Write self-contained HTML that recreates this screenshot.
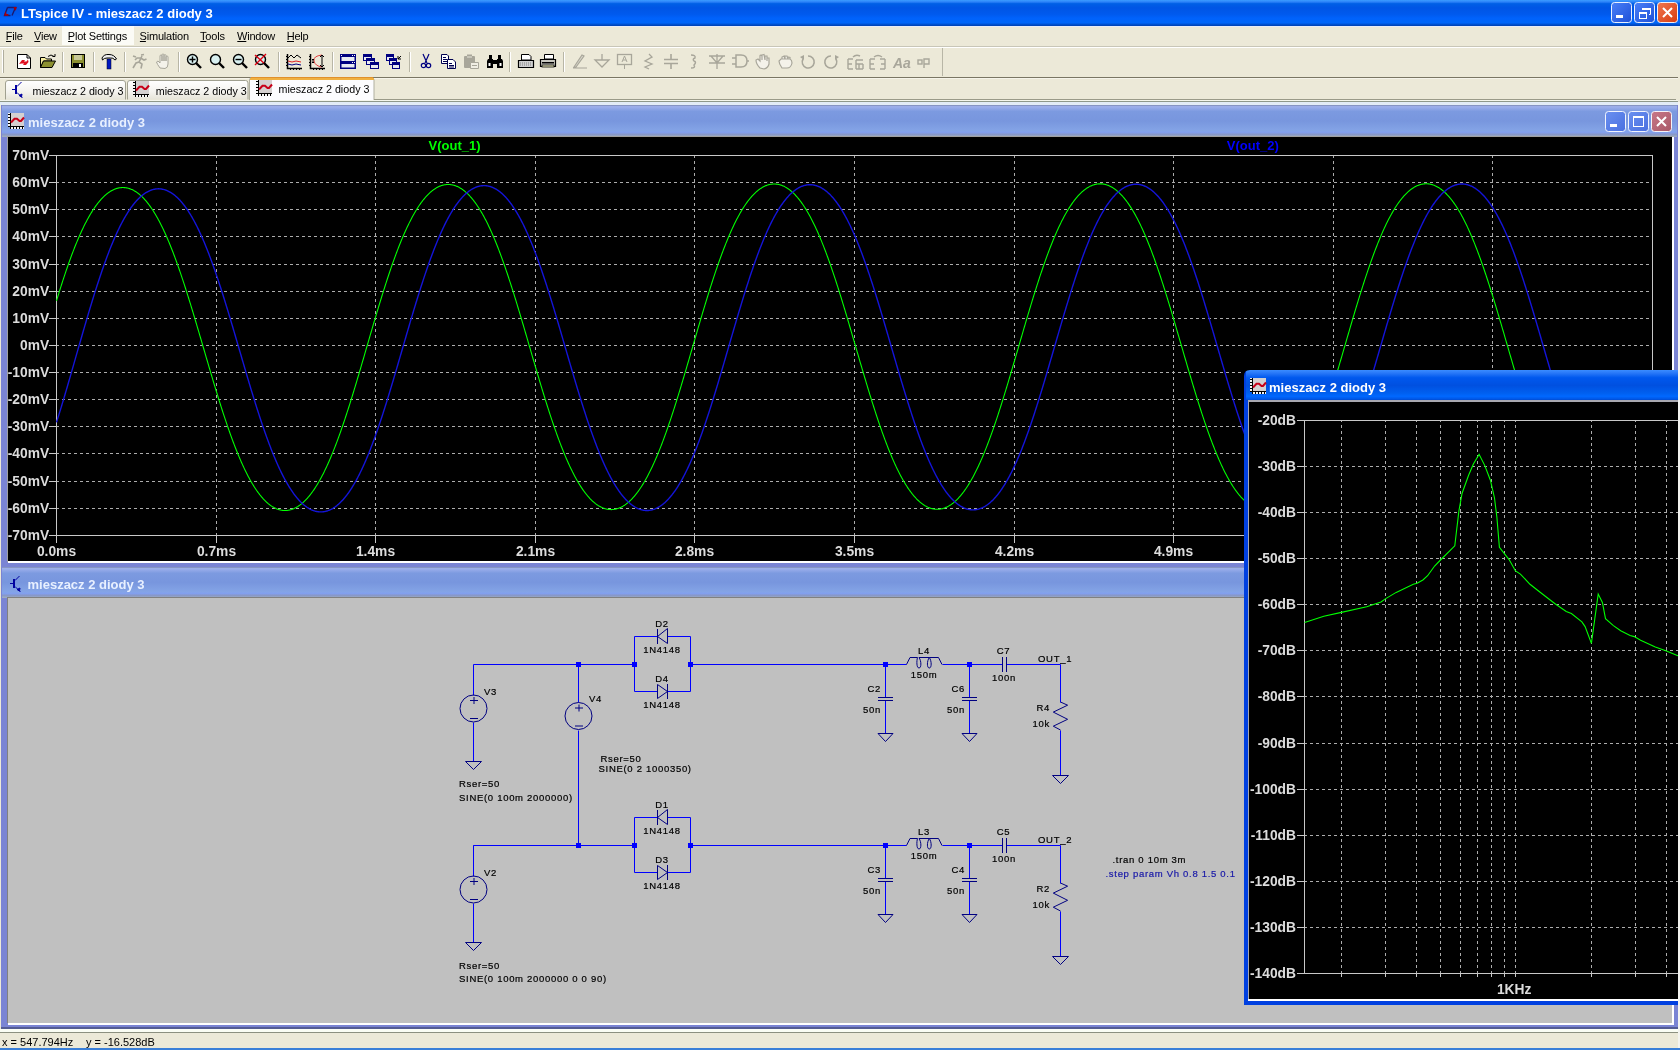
<!DOCTYPE html>
<html><head><meta charset="utf-8"><style>
html,body{margin:0;padding:0;overflow:hidden;background:#ECE9D8}
svg text{font-family:"Liberation Sans", sans-serif;white-space:pre}
</style></head><body>
<svg width="1680" height="1050" viewBox="0 0 1680 1050" style="display:block;will-change:transform" font-family="'Liberation Sans', sans-serif">
<defs>
<linearGradient id="gMain" x1="0" y1="0" x2="0" y2="1">
<stop offset="0" stop-color="#3C9CFF"/><stop offset="0.08" stop-color="#2A80F8"/><stop offset="0.14" stop-color="#0060E6"/>
<stop offset="0.3" stop-color="#0055E5"/><stop offset="0.55" stop-color="#005AEE"/><stop offset="0.7" stop-color="#0062FC"/>
<stop offset="0.88" stop-color="#0066F8"/><stop offset="0.94" stop-color="#0050D0"/><stop offset="1" stop-color="#0040B0"/>
</linearGradient>
<linearGradient id="gInact" x1="0" y1="0" x2="0" y2="1">
<stop offset="0" stop-color="#7A88B0"/><stop offset="0.05" stop-color="#9EB0EC"/><stop offset="0.2" stop-color="#7C9AE0"/>
<stop offset="0.5" stop-color="#7896DE"/><stop offset="0.8" stop-color="#84A4E6"/><stop offset="0.85" stop-color="#82A0F0"/>
<stop offset="0.92" stop-color="#8898C8"/><stop offset="1" stop-color="#A0B0C0"/>
</linearGradient>
<linearGradient id="gAct" x1="0" y1="0" x2="0" y2="1">
<stop offset="0" stop-color="#3A8CFF"/><stop offset="0.1" stop-color="#2878F8"/><stop offset="0.25" stop-color="#0058EE"/>
<stop offset="0.5" stop-color="#0050E0"/><stop offset="0.75" stop-color="#0060F0"/><stop offset="0.85" stop-color="#0068FF"/>
<stop offset="0.93" stop-color="#0058E8"/><stop offset="1" stop-color="#0040C0"/>
</linearGradient>
</defs>
<rect x="0" y="0" width="1680" height="1050" fill="#ECE9D8" />
<rect x="0" y="0" width="1680" height="26" fill="url(#gMain)" />
<rect x="0" y="26" width="1680" height="1" fill="#E8ECF8" />
<text x="21" y="18" font-size="13" font-weight="700" fill="#FFFFFF" text-anchor="start" >LTspice IV - mieszacz 2 diody 3</text>
<rect x="62" y="26" width="72" height="19" fill="#FBFBF6" />
<rect x="0" y="46" width="1680" height="1" fill="#C8C6B8" />
<rect x="0" y="47" width="1680" height="1" fill="#FFFFFF" />
<rect x="0" y="77" width="1678" height="1" fill="#7A7664" />
<rect x="0" y="78" width="1678" height="1" fill="#F6F4EA" />
<rect x="1" y="105" width="1677" height="462" fill="#7A84D4" />
<rect x="2" y="105" width="1675" height="32" fill="url(#gInact)" />
<rect x="7" y="136" width="1666" height="426" fill="#A0A0A0" />
<rect x="8" y="137" width="1664" height="424" fill="#000000" />
<rect x="8" y="561" width="1666" height="2" fill="#FFFFFF" />
<rect x="1672" y="137" width="2" height="426" fill="#FFFFFF" />
<path d="M216.5 155V535 M375.5 155V535 M535.5 155V535 M694.5 155V535 M854.5 155V535 M1014.5 155V535 M1173.5 155V535 M1333.5 155V535 M1492.5 155V535" stroke="#ACACAC" stroke-width="1" stroke-dasharray="3 3" fill="none"/>
<path d="M56 182.5H1652 M56 209.5H1652 M56 236.5H1652 M56 264.5H1652 M56 291.5H1652 M56 318.5H1652 M56 345.5H1652 M56 372.5H1652 M56 399.5H1652 M56 426.5H1652 M56 453.5H1652 M56 481.5H1652 M56 508.5H1652" stroke="#ACACAC" stroke-width="1" stroke-dasharray="3 3" fill="none"/>
<path d="M56.5 155V543 M56 535.5H1653 M56 155.5H1653 M1652.5 155V536" stroke="#C8C8C8" stroke-width="1" fill="none"/>
<path d="M49 155.5H56 M49 182.5H56 M49 209.5H56 M49 236.5H56 M49 264.5H56 M49 291.5H56 M49 318.5H56 M49 345.5H56 M49 372.5H56 M49 399.5H56 M49 426.5H56 M49 453.5H56 M49 481.5H56 M49 508.5H56 M49 535.5H56 M56.5 535V543 M216.5 535V543 M375.5 535V543 M535.5 535V543 M694.5 535V543 M854.5 535V543 M1014.5 535V543 M1173.5 535V543 M1333.5 535V543 M1492.5 535V543 M1652.5 535V543" stroke="#C8C8C8" stroke-width="1" fill="none"/>
<text x="49.2" y="160.3" font-size="13.8" font-weight="700" fill="#DCDCDC" text-anchor="end" >70mV</text>
<text x="49.2" y="187.3" font-size="13.8" font-weight="700" fill="#DCDCDC" text-anchor="end" >60mV</text>
<text x="49.2" y="214.3" font-size="13.8" font-weight="700" fill="#DCDCDC" text-anchor="end" >50mV</text>
<text x="49.2" y="241.3" font-size="13.8" font-weight="700" fill="#DCDCDC" text-anchor="end" >40mV</text>
<text x="49.2" y="269.3" font-size="13.8" font-weight="700" fill="#DCDCDC" text-anchor="end" >30mV</text>
<text x="49.2" y="296.3" font-size="13.8" font-weight="700" fill="#DCDCDC" text-anchor="end" >20mV</text>
<text x="49.2" y="323.3" font-size="13.8" font-weight="700" fill="#DCDCDC" text-anchor="end" >10mV</text>
<text x="49.2" y="350.3" font-size="13.8" font-weight="700" fill="#DCDCDC" text-anchor="end" >0mV</text>
<text x="49.2" y="377.3" font-size="13.8" font-weight="700" fill="#DCDCDC" text-anchor="end" >-10mV</text>
<text x="49.2" y="404.3" font-size="13.8" font-weight="700" fill="#DCDCDC" text-anchor="end" >-20mV</text>
<text x="49.2" y="431.3" font-size="13.8" font-weight="700" fill="#DCDCDC" text-anchor="end" >-30mV</text>
<text x="49.2" y="458.3" font-size="13.8" font-weight="700" fill="#DCDCDC" text-anchor="end" >-40mV</text>
<text x="49.2" y="486.3" font-size="13.8" font-weight="700" fill="#DCDCDC" text-anchor="end" >-50mV</text>
<text x="49.2" y="513.3" font-size="13.8" font-weight="700" fill="#DCDCDC" text-anchor="end" >-60mV</text>
<text x="49.2" y="540.3" font-size="13.8" font-weight="700" fill="#DCDCDC" text-anchor="end" >-70mV</text>
<text x="56.5" y="556" font-size="13.8" font-weight="700" fill="#DCDCDC" text-anchor="middle" >0.0ms</text>
<text x="216.5" y="556" font-size="13.8" font-weight="700" fill="#DCDCDC" text-anchor="middle" >0.7ms</text>
<text x="375.5" y="556" font-size="13.8" font-weight="700" fill="#DCDCDC" text-anchor="middle" >1.4ms</text>
<text x="535.5" y="556" font-size="13.8" font-weight="700" fill="#DCDCDC" text-anchor="middle" >2.1ms</text>
<text x="694.5" y="556" font-size="13.8" font-weight="700" fill="#DCDCDC" text-anchor="middle" >2.8ms</text>
<text x="854.5" y="556" font-size="13.8" font-weight="700" fill="#DCDCDC" text-anchor="middle" >3.5ms</text>
<text x="1014.5" y="556" font-size="13.8" font-weight="700" fill="#DCDCDC" text-anchor="middle" >4.2ms</text>
<text x="1173.5" y="556" font-size="13.8" font-weight="700" fill="#DCDCDC" text-anchor="middle" >4.9ms</text>
<text x="1333.5" y="556" font-size="13.8" font-weight="700" fill="#DCDCDC" text-anchor="middle" >5.6ms</text>
<text x="1492.5" y="556" font-size="13.8" font-weight="700" fill="#DCDCDC" text-anchor="middle" >6.3ms</text>
<text x="1652.5" y="556" font-size="13.8" font-weight="700" fill="#DCDCDC" text-anchor="middle" >7.0ms</text>
<text x="454.5" y="150" font-size="13" font-weight="700" fill="#00FF00" text-anchor="middle" >V(out_1)</text>
<text x="1252.8" y="150" font-size="13" font-weight="700" fill="#0000FF" text-anchor="middle" >V(out_2)</text>
<clipPath id="c1"><rect x="56" y="155" width="1597" height="381"/></clipPath>
<polyline points="56.5,300.81 57.0,299.17 57.5,297.53 58.0,295.91 58.5,294.29 59.0,292.68 59.5,291.08 60.0,289.48 60.5,287.90 61.0,286.33 61.5,284.76 62.0,283.21 62.5,281.66 63.0,280.12 63.5,278.60 64.0,277.08 64.5,275.57 65.0,274.08 65.5,272.59 66.0,271.12 66.5,269.66 67.0,268.20 67.5,266.76 68.0,265.33 68.5,263.91 69.0,262.50 69.5,261.11 70.0,259.72 70.5,258.35 71.0,256.99 71.5,255.64 72.0,254.31 72.5,252.98 73.0,251.67 73.5,250.37 74.0,249.09 74.5,247.81 75.0,246.55 75.5,245.30 76.0,244.07 76.5,242.84 77.0,241.63 77.5,240.44 78.0,239.25 78.5,238.08 79.0,236.93 79.5,235.78 80.0,234.65 80.5,233.54 81.0,232.43 81.5,231.34 82.0,230.27 82.5,229.20 83.0,228.15 83.5,227.12 84.0,226.09 84.5,225.09 85.0,224.09 85.5,223.11 86.0,222.14 86.5,221.19 87.0,220.25 87.5,219.32 88.0,218.41 88.5,217.51 89.0,216.62 89.5,215.75 90.0,214.90 90.5,214.05 91.0,213.22 91.5,212.40 92.0,211.60 92.5,210.81 93.0,210.04 93.5,209.28 94.0,208.53 94.5,207.79 95.0,207.07 95.5,206.36 96.0,205.67 96.5,204.99 97.0,204.32 97.5,203.67 98.0,203.03 98.5,202.40 99.0,201.79 99.5,201.19 100.0,200.61 100.5,200.03 101.0,199.47 101.5,198.93 102.0,198.39 102.5,197.87 103.0,197.37 103.5,196.87 104.0,196.39 104.5,195.93 105.0,195.47 105.5,195.03 106.0,194.60 106.5,194.19 107.0,193.78 107.5,193.39 108.0,193.02 108.5,192.65 109.0,192.30 109.5,191.96 110.0,191.64 110.5,191.32 111.0,191.02 111.5,190.73 112.0,190.46 112.5,190.20 113.0,189.95 113.5,189.71 114.0,189.48 114.5,189.27 115.0,189.07 115.5,188.88 116.0,188.71 116.5,188.54 117.0,188.39 117.5,188.26 118.0,188.13 118.5,188.02 119.0,187.91 119.5,187.83 120.0,187.75 120.5,187.69 121.0,187.63 121.5,187.59 122.0,187.57 122.5,187.55 123.0,187.55 123.5,187.56 124.0,187.58 124.5,187.62 125.0,187.66 125.5,187.72 126.0,187.79 126.5,187.88 127.0,187.97 127.5,188.08 128.0,188.20 128.5,188.34 129.0,188.48 129.5,188.64 130.0,188.81 130.5,188.99 131.0,189.19 131.5,189.40 132.0,189.62 132.5,189.85 133.0,190.09 133.5,190.35 134.0,190.62 134.5,190.91 135.0,191.20 135.5,191.51 136.0,191.83 136.5,192.17 137.0,192.51 137.5,192.87 138.0,193.25 138.5,193.63 139.0,194.03 139.5,194.44 140.0,194.86 140.5,195.30 141.0,195.75 141.5,196.21 142.0,196.69 142.5,197.18 143.0,197.68 143.5,198.20 144.0,198.72 144.5,199.27 145.0,199.82 145.5,200.39 146.0,200.97 146.5,201.57 147.0,202.17 147.5,202.80 148.0,203.43 148.5,204.08 149.0,204.74 149.5,205.42 150.0,206.11 150.5,206.81 151.0,207.52 151.5,208.25 152.0,209.00 152.5,209.75 153.0,210.52 153.5,211.31 154.0,212.10 154.5,212.92 155.0,213.74 155.5,214.58 156.0,215.43 156.5,216.29 157.0,217.17 157.5,218.07 158.0,218.97 158.5,219.89 159.0,220.83 159.5,221.77 160.0,222.73 160.5,223.71 161.0,224.69 161.5,225.69 162.0,226.71 162.5,227.74 163.0,228.78 163.5,229.83 164.0,230.90 164.5,231.98 165.0,233.07 165.5,234.18 166.0,235.30 166.5,236.43 167.0,237.58 167.5,238.74 168.0,239.91 168.5,241.10 169.0,242.29 169.5,243.50 170.0,244.73 170.5,245.96 171.0,247.21 171.5,248.47 172.0,249.74 172.5,251.03 173.0,252.32 173.5,253.63 174.0,254.95 174.5,256.28 175.0,257.62 175.5,258.98 176.0,260.34 176.5,261.72 177.0,263.11 177.5,264.51 178.0,265.92 178.5,267.34 179.0,268.77 179.5,270.21 180.0,271.66 180.5,273.12 181.0,274.60 181.5,276.08 182.0,277.57 182.5,279.07 183.0,280.58 183.5,282.10 184.0,283.63 184.5,285.16 185.0,286.71 185.5,288.26 186.0,289.82 186.5,291.39 187.0,292.97 187.5,294.55 188.0,296.15 188.5,297.75 189.0,299.35 189.5,300.97 190.0,302.59 190.5,304.21 191.0,305.85 191.5,307.49 192.0,309.13 192.5,310.78 193.0,312.44 193.5,314.10 194.0,315.76 194.5,317.43 195.0,319.11 195.5,320.78 196.0,322.47 196.5,324.15 197.0,325.84 197.5,327.54 198.0,329.23 198.5,330.93 199.0,332.63 199.5,334.34 200.0,336.04 200.5,337.75 201.0,339.46 201.5,341.17 202.0,342.88 202.5,344.59 203.0,346.30 203.5,348.02 204.0,349.73 204.5,351.44 205.0,353.16 205.5,354.87 206.0,356.58 206.5,358.29 207.0,360.00 207.5,361.71 208.0,363.41 208.5,365.12 209.0,366.82 209.5,368.52 210.0,370.21 210.5,371.90 211.0,373.59 211.5,375.28 212.0,376.96 212.5,378.64 213.0,380.31 213.5,381.98 214.0,383.65 214.5,385.31 215.0,386.96 215.5,388.61 216.0,390.26 216.5,391.89 217.0,393.53 217.5,395.15 218.0,396.77 218.5,398.38 219.0,399.99 219.5,401.59 220.0,403.18 220.5,404.77 221.0,406.34 221.5,407.91 222.0,409.47 222.5,411.02 223.0,412.57 223.5,414.10 224.0,415.63 224.5,417.15 225.0,418.66 225.5,420.16 226.0,421.65 226.5,423.13 227.0,424.60 227.5,426.06 228.0,427.51 228.5,428.95 229.0,430.38 229.5,431.80 230.0,433.21 230.5,434.61 231.0,436.00 231.5,437.37 232.0,438.74 232.5,440.09 233.0,441.44 233.5,442.77 234.0,444.09 234.5,445.39 235.0,446.69 235.5,447.97 236.0,449.24 236.5,450.50 237.0,451.75 237.5,452.99 238.0,454.21 238.5,455.42 239.0,456.62 239.5,457.80 240.0,458.97 240.5,460.13 241.0,461.28 241.5,462.41 242.0,463.53 242.5,464.64 243.0,465.73 243.5,466.82 244.0,467.88 244.5,468.94 245.0,469.98 245.5,471.01 246.0,472.02 246.5,473.02 247.0,474.01 247.5,474.99 248.0,475.95 248.5,476.90 249.0,477.83 249.5,478.75 250.0,479.66 250.5,480.55 251.0,481.43 251.5,482.30 252.0,483.16 252.5,484.00 253.0,484.82 253.5,485.63 254.0,486.43 254.5,487.22 255.0,487.99 255.5,488.75 256.0,489.50 256.5,490.23 257.0,490.95 257.5,491.65 258.0,492.34 258.5,493.02 259.0,493.69 259.5,494.34 260.0,494.98 260.5,495.60 261.0,496.21 261.5,496.81 262.0,497.40 262.5,497.97 263.0,498.53 263.5,499.07 264.0,499.61 264.5,500.13 265.0,500.63 265.5,501.13 266.0,501.61 266.5,502.07 267.0,502.53 267.5,502.97 268.0,503.40 268.5,503.82 269.0,504.22 269.5,504.61 270.0,504.99 270.5,505.35 271.0,505.71 271.5,506.05 272.0,506.37 272.5,506.69 273.0,506.99 273.5,507.28 274.0,507.56 274.5,507.82 275.0,508.07 275.5,508.31 276.0,508.54 276.5,508.75 277.0,508.96 277.5,509.15 278.0,509.32 278.5,509.49 279.0,509.64 279.5,509.78 280.0,509.91 280.5,510.03 281.0,510.13 281.5,510.23 282.0,510.31 282.5,510.37 283.0,510.43 283.5,510.47 284.0,510.50 284.5,510.52 285.0,510.53 285.5,510.52 286.0,510.51 286.5,510.48 287.0,510.43 287.5,510.38 288.0,510.31 288.5,510.24 289.0,510.14 289.5,510.04 290.0,509.93 290.5,509.80 291.0,509.66 291.5,509.51 292.0,509.34 292.5,509.17 293.0,508.98 293.5,508.78 294.0,508.56 294.5,508.34 295.0,508.10 295.5,507.85 296.0,507.58 296.5,507.31 297.0,507.02 297.5,506.72 298.0,506.41 298.5,506.08 299.0,505.74 299.5,505.39 300.0,505.03 300.5,504.65 301.0,504.26 301.5,503.86 302.0,503.45 302.5,503.02 303.0,502.58 303.5,502.13 304.0,501.66 304.5,501.18 305.0,500.69 305.5,500.18 306.0,499.67 306.5,499.14 307.0,498.59 307.5,498.03 308.0,497.46 308.5,496.88 309.0,496.28 309.5,495.67 310.0,495.05 310.5,494.41 311.0,493.76 311.5,493.10 312.0,492.42 312.5,491.74 313.0,491.03 313.5,490.32 314.0,489.58 314.5,488.84 315.0,488.08 315.5,487.31 316.0,486.53 316.5,485.73 317.0,484.92 317.5,484.10 318.0,483.26 318.5,482.41 319.0,481.54 319.5,480.66 320.0,479.77 320.5,478.86 321.0,477.95 321.5,477.01 322.0,476.07 322.5,475.11 323.0,474.13 323.5,473.15 324.0,472.15 324.5,471.13 325.0,470.11 325.5,469.07 326.0,468.01 326.5,466.95 327.0,465.87 327.5,464.77 328.0,463.67 328.5,462.55 329.0,461.42 329.5,460.27 330.0,459.11 330.5,457.94 331.0,456.76 331.5,455.56 332.0,454.35 332.5,453.13 333.0,451.90 333.5,450.65 334.0,449.39 334.5,448.12 335.0,446.84 335.5,445.54 336.0,444.23 336.5,442.92 337.0,441.58 337.5,440.24 338.0,438.89 338.5,437.52 339.0,436.15 339.5,434.76 340.0,433.36 340.5,431.95 341.0,430.53 341.5,429.10 342.0,427.66 342.5,426.21 343.0,424.74 343.5,423.27 344.0,421.79 344.5,420.30 345.0,418.80 345.5,417.29 346.0,415.77 346.5,414.24 347.0,412.70 347.5,411.15 348.0,409.60 348.5,408.04 349.0,406.47 349.5,404.89 350.0,403.30 350.5,401.70 351.0,400.10 351.5,398.49 352.0,396.88 352.5,395.25 353.0,393.62 353.5,391.99 354.0,390.35 354.5,388.70 355.0,387.05 355.5,385.39 356.0,383.72 356.5,382.05 357.0,380.38 357.5,378.70 358.0,377.02 358.5,375.33 359.0,373.64 359.5,371.94 360.0,370.24 360.5,368.54 361.0,366.84 361.5,365.13 362.0,363.42 362.5,361.71 363.0,359.99 363.5,358.28 364.0,356.56 364.5,354.84 365.0,353.12 365.5,351.40 366.0,349.68 366.5,347.96 367.0,346.24 367.5,344.52 368.0,342.80 368.5,341.08 369.0,339.36 369.5,337.64 370.0,335.92 370.5,334.21 371.0,332.49 371.5,330.78 372.0,329.07 372.5,327.37 373.0,325.66 373.5,323.96 374.0,322.27 374.5,320.57 375.0,318.88 375.5,317.20 376.0,315.52 376.5,313.84 377.0,312.17 377.5,310.50 378.0,308.84 378.5,307.18 379.0,305.53 379.5,303.88 380.0,302.25 380.5,300.61 381.0,298.99 381.5,297.37 382.0,295.75 382.5,294.15 383.0,292.55 383.5,290.96 384.0,289.37 384.5,287.80 385.0,286.23 385.5,284.67 386.0,283.12 386.5,281.58 387.0,280.04 387.5,278.52 388.0,277.00 388.5,275.50 389.0,274.00 389.5,272.51 390.0,271.03 390.5,269.57 391.0,268.11 391.5,266.66 392.0,265.22 392.5,263.80 393.0,262.38 393.5,260.98 394.0,259.58 394.5,258.20 395.0,256.83 395.5,255.47 396.0,254.12 396.5,252.78 397.0,251.46 397.5,250.14 398.0,248.84 398.5,247.55 399.0,246.28 399.5,245.01 400.0,243.76 400.5,242.52 401.0,241.29 401.5,240.07 402.0,238.87 402.5,237.68 403.0,236.50 403.5,235.33 404.0,234.18 404.5,233.04 405.0,231.92 405.5,230.80 406.0,229.70 406.5,228.62 407.0,227.54 407.5,226.48 408.0,225.43 408.5,224.40 409.0,223.38 409.5,222.37 410.0,221.38 410.5,220.40 411.0,219.43 411.5,218.48 412.0,217.54 412.5,216.61 413.0,215.70 413.5,214.80 414.0,213.91 414.5,213.04 415.0,212.18 415.5,211.34 416.0,210.50 416.5,209.69 417.0,208.88 417.5,208.09 418.0,207.31 418.5,206.55 419.0,205.80 419.5,205.06 420.0,204.34 420.5,203.63 421.0,202.93 421.5,202.25 422.0,201.58 422.5,200.92 423.0,200.28 423.5,199.65 424.0,199.03 424.5,198.43 425.0,197.84 425.5,197.26 426.0,196.69 426.5,196.14 427.0,195.61 427.5,195.08 428.0,194.57 428.5,194.07 429.0,193.59 429.5,193.11 430.0,192.65 430.5,192.21 431.0,191.77 431.5,191.35 432.0,190.94 432.5,190.55 433.0,190.17 433.5,189.80 434.0,189.44 434.5,189.09 435.0,188.76 435.5,188.44 436.0,188.14 436.5,187.84 437.0,187.56 437.5,187.29 438.0,187.03 438.5,186.79 439.0,186.56 439.5,186.34 440.0,186.13 440.5,185.94 441.0,185.76 441.5,185.59 442.0,185.43 442.5,185.28 443.0,185.15 443.5,185.03 444.0,184.92 444.5,184.82 445.0,184.74 445.5,184.67 446.0,184.61 446.5,184.56 447.0,184.52 447.5,184.50 448.0,184.49 448.5,184.49 449.0,184.50 449.5,184.53 450.0,184.57 450.5,184.62 451.0,184.68 451.5,184.75 452.0,184.84 452.5,184.94 453.0,185.05 453.5,185.17 454.0,185.31 454.5,185.46 455.0,185.62 455.5,185.79 456.0,185.97 456.5,186.17 457.0,186.38 457.5,186.60 458.0,186.84 458.5,187.08 459.0,187.34 459.5,187.61 460.0,187.90 460.5,188.19 461.0,188.50 461.5,188.83 462.0,189.16 462.5,189.51 463.0,189.87 463.5,190.24 464.0,190.62 464.5,191.02 465.0,191.43 465.5,191.86 466.0,192.29 466.5,192.74 467.0,193.20 467.5,193.68 468.0,194.17 468.5,194.67 469.0,195.18 469.5,195.71 470.0,196.25 470.5,196.80 471.0,197.37 471.5,197.95 472.0,198.54 472.5,199.15 473.0,199.77 473.5,200.40 474.0,201.05 474.5,201.71 475.0,202.38 475.5,203.07 476.0,203.77 476.5,204.48 477.0,205.20 477.5,205.94 478.0,206.70 478.5,207.46 479.0,208.25 479.5,209.04 480.0,209.85 480.5,210.67 481.0,211.50 481.5,212.35 482.0,213.21 482.5,214.09 483.0,214.98 483.5,215.88 484.0,216.79 484.5,217.72 485.0,218.67 485.5,219.62 486.0,220.59 486.5,221.58 487.0,222.57 487.5,223.58 488.0,224.61 488.5,225.64 489.0,226.69 489.5,227.76 490.0,228.83 490.5,229.92 491.0,231.02 491.5,232.14 492.0,233.27 492.5,234.41 493.0,235.57 493.5,236.73 494.0,237.91 494.5,239.11 495.0,240.31 495.5,241.53 496.0,242.76 496.5,244.01 497.0,245.26 497.5,246.53 498.0,247.81 498.5,249.10 499.0,250.40 499.5,251.72 500.0,253.05 500.5,254.39 501.0,255.74 501.5,257.10 502.0,258.47 502.5,259.86 503.0,261.25 503.5,262.66 504.0,264.08 504.5,265.50 505.0,266.94 505.5,268.39 506.0,269.85 506.5,271.32 507.0,272.80 507.5,274.29 508.0,275.78 508.5,277.29 509.0,278.81 509.5,280.33 510.0,281.87 510.5,283.41 511.0,284.96 511.5,286.52 512.0,288.09 512.5,289.67 513.0,291.25 513.5,292.84 514.0,294.44 514.5,296.05 515.0,297.66 515.5,299.28 516.0,300.91 516.5,302.54 517.0,304.18 517.5,305.83 518.0,307.48 518.5,309.13 519.0,310.79 519.5,312.46 520.0,314.13 520.5,315.81 521.0,317.49 521.5,319.17 522.0,320.86 522.5,322.55 523.0,324.25 523.5,325.95 524.0,327.65 524.5,329.35 525.0,331.06 525.5,332.77 526.0,334.48 526.5,336.19 527.0,337.91 527.5,339.63 528.0,341.34 528.5,343.06 529.0,344.78 529.5,346.50 530.0,348.22 530.5,349.93 531.0,351.65 531.5,353.37 532.0,355.09 532.5,356.80 533.0,358.52 533.5,360.23 534.0,361.94 534.5,363.65 535.0,365.35 535.5,367.06 536.0,368.76 536.5,370.45 537.0,372.15 537.5,373.84 538.0,375.53 538.5,377.21 539.0,378.89 539.5,380.56 540.0,382.23 540.5,383.90 541.0,385.56 541.5,387.21 542.0,388.86 542.5,390.50 543.0,392.14 543.5,393.77 544.0,395.39 544.5,397.01 545.0,398.62 545.5,400.22 546.0,401.82 546.5,403.41 547.0,404.99 547.5,406.56 548.0,408.13 548.5,409.68 549.0,411.23 549.5,412.77 550.0,414.30 550.5,415.83 551.0,417.34 551.5,418.84 552.0,420.34 552.5,421.82 553.0,423.30 553.5,424.76 554.0,426.22 554.5,427.66 555.0,429.10 555.5,430.52 556.0,431.93 556.5,433.34 557.0,434.73 557.5,436.11 558.0,437.48 558.5,438.83 559.0,440.18 559.5,441.52 560.0,442.84 560.5,444.15 561.0,445.45 561.5,446.74 562.0,448.01 562.5,449.27 563.0,450.53 563.5,451.76 564.0,452.99 564.5,454.20 565.0,455.41 565.5,456.59 566.0,457.77 566.5,458.93 567.0,460.08 567.5,461.22 568.0,462.34 568.5,463.45 569.0,464.55 569.5,465.64 570.0,466.71 570.5,467.77 571.0,468.81 571.5,469.84 572.0,470.86 572.5,471.87 573.0,472.86 573.5,473.83 574.0,474.80 574.5,475.75 575.0,476.69 575.5,477.61 576.0,478.52 576.5,479.42 577.0,480.30 577.5,481.17 578.0,482.03 578.5,482.87 579.0,483.70 579.5,484.52 580.0,485.32 580.5,486.11 581.0,486.89 581.5,487.65 582.0,488.40 582.5,489.13 583.0,489.85 583.5,490.56 584.0,491.26 584.5,491.94 585.0,492.60 585.5,493.26 586.0,493.90 586.5,494.53 587.0,495.14 587.5,495.74 588.0,496.33 588.5,496.91 589.0,497.47 589.5,498.02 590.0,498.55 590.5,499.08 591.0,499.58 591.5,500.08 592.0,500.56 592.5,501.03 593.0,501.49 593.5,501.94 594.0,502.37 594.5,502.79 595.0,503.19 595.5,503.59 596.0,503.97 596.5,504.33 597.0,504.69 597.5,505.03 598.0,505.36 598.5,505.68 599.0,505.98 599.5,506.28 600.0,506.55 600.5,506.82 601.0,507.08 601.5,507.32 602.0,507.55 602.5,507.77 603.0,507.97 603.5,508.16 604.0,508.34 604.5,508.51 605.0,508.67 605.5,508.81 606.0,508.94 606.5,509.06 607.0,509.17 607.5,509.26 608.0,509.34 608.5,509.41 609.0,509.47 609.5,509.52 610.0,509.55 610.5,509.57 611.0,509.58 611.5,509.58 612.0,509.56 612.5,509.54 613.0,509.50 613.5,509.44 614.0,509.38 614.5,509.30 615.0,509.21 615.5,509.11 616.0,509.00 616.5,508.88 617.0,508.74 617.5,508.59 618.0,508.43 618.5,508.25 619.0,508.07 619.5,507.87 620.0,507.66 620.5,507.43 621.0,507.20 621.5,506.95 622.0,506.69 622.5,506.41 623.0,506.13 623.5,505.83 624.0,505.52 624.5,505.19 625.0,504.86 625.5,504.51 626.0,504.15 626.5,503.77 627.0,503.38 627.5,502.98 628.0,502.57 628.5,502.15 629.0,501.71 629.5,501.26 630.0,500.79 630.5,500.32 631.0,499.83 631.5,499.32 632.0,498.81 632.5,498.28 633.0,497.74 633.5,497.18 634.0,496.61 634.5,496.03 635.0,495.44 635.5,494.83 636.0,494.21 636.5,493.57 637.0,492.92 637.5,492.26 638.0,491.59 638.5,490.90 639.0,490.20 639.5,489.48 640.0,488.76 640.5,488.01 641.0,487.26 641.5,486.49 642.0,485.71 642.5,484.91 643.0,484.10 643.5,483.28 644.0,482.44 644.5,481.59 645.0,480.73 645.5,479.85 646.0,478.96 646.5,478.06 647.0,477.14 647.5,476.21 648.0,475.27 648.5,474.31 649.0,473.34 649.5,472.35 650.0,471.35 650.5,470.34 651.0,469.32 651.5,468.28 652.0,467.23 652.5,466.16 653.0,465.08 653.5,463.99 654.0,462.89 654.5,461.77 655.0,460.64 655.5,459.50 656.0,458.34 656.5,457.17 657.0,455.99 657.5,454.79 658.0,453.59 658.5,452.37 659.0,451.13 659.5,449.89 660.0,448.63 660.5,447.36 661.0,446.08 661.5,444.79 662.0,443.48 662.5,442.16 663.0,440.83 663.5,439.49 664.0,438.14 664.5,436.78 665.0,435.40 665.5,434.02 666.0,432.62 666.5,431.21 667.0,429.79 667.5,428.36 668.0,426.92 668.5,425.47 669.0,424.01 669.5,422.54 670.0,421.06 670.5,419.57 671.0,418.07 671.5,416.56 672.0,415.04 672.5,413.52 673.0,411.98 673.5,410.44 674.0,408.88 674.5,407.32 675.0,405.75 675.5,404.17 676.0,402.59 676.5,400.99 677.0,399.39 677.5,397.78 678.0,396.17 678.5,394.55 679.0,392.92 679.5,391.29 680.0,389.65 680.5,388.00 681.0,386.35 681.5,384.69 682.0,383.03 682.5,381.36 683.0,379.68 683.5,378.01 684.0,376.33 684.5,374.64 685.0,372.95 685.5,371.26 686.0,369.56 686.5,367.86 687.0,366.16 687.5,364.45 688.0,362.74 688.5,361.03 689.0,359.32 689.5,357.60 690.0,355.89 690.5,354.17 691.0,352.45 691.5,350.73 692.0,349.01 692.5,347.29 693.0,345.57 693.5,343.85 694.0,342.13 694.5,340.41 695.0,338.69 695.5,336.98 696.0,335.26 696.5,333.55 697.0,331.84 697.5,330.13 698.0,328.42 698.5,326.71 699.0,325.01 699.5,323.31 700.0,321.62 700.5,319.93 701.0,318.24 701.5,316.55 702.0,314.87 702.5,313.20 703.0,311.53 703.5,309.86 704.0,308.20 704.5,306.54 705.0,304.89 705.5,303.25 706.0,301.61 706.5,299.98 707.0,298.35 707.5,296.74 708.0,295.12 708.5,293.52 709.0,291.92 709.5,290.33 710.0,288.75 710.5,287.17 711.0,285.61 711.5,284.05 712.0,282.50 712.5,280.96 713.0,279.42 713.5,277.90 714.0,276.39 714.5,274.88 715.0,273.39 715.5,271.90 716.0,270.42 716.5,268.96 717.0,267.50 717.5,266.05 718.0,264.62 718.5,263.19 719.0,261.78 719.5,260.38 720.0,258.98 720.5,257.60 721.0,256.23 721.5,254.87 722.0,253.52 722.5,252.19 723.0,250.86 723.5,249.55 724.0,248.25 724.5,246.96 725.0,245.68 725.5,244.42 726.0,243.17 726.5,241.93 727.0,240.70 727.5,239.49 728.0,238.28 728.5,237.09 729.0,235.92 729.5,234.75 730.0,233.60 730.5,232.46 731.0,231.34 731.5,230.23 732.0,229.13 732.5,228.04 733.0,226.97 733.5,225.91 734.0,224.86 734.5,223.83 735.0,222.81 735.5,221.80 736.0,220.81 736.5,219.83 737.0,218.87 737.5,217.91 738.0,216.97 738.5,216.05 739.0,215.14 739.5,214.24 740.0,213.35 740.5,212.48 741.0,211.62 741.5,210.78 742.0,209.95 742.5,209.13 743.0,208.33 743.5,207.54 744.0,206.76 744.5,206.00 745.0,205.25 745.5,204.51 746.0,203.79 746.5,203.08 747.0,202.38 747.5,201.70 748.0,201.03 748.5,200.38 749.0,199.73 749.5,199.11 750.0,198.49 750.5,197.89 751.0,197.30 751.5,196.72 752.0,196.16 752.5,195.61 753.0,195.07 753.5,194.55 754.0,194.04 754.5,193.54 755.0,193.06 755.5,192.58 756.0,192.13 756.5,191.68 757.0,191.25 757.5,190.83 758.0,190.42 758.5,190.03 759.0,189.64 759.5,189.28 760.0,188.92 760.5,188.58 761.0,188.24 761.5,187.93 762.0,187.62 762.5,187.33 763.0,187.05 763.5,186.78 764.0,186.52 764.5,186.28 765.0,186.05 765.5,185.83 766.0,185.62 766.5,185.43 767.0,185.25 767.5,185.08 768.0,184.92 768.5,184.78 769.0,184.65 769.5,184.53 770.0,184.42 770.5,184.32 771.0,184.24 771.5,184.17 772.0,184.11 772.5,184.06 773.0,184.03 773.5,184.00 774.0,183.99 774.5,184.00 775.0,184.01 775.5,184.04 776.0,184.08 776.5,184.13 777.0,184.19 777.5,184.26 778.0,184.35 778.5,184.45 779.0,184.56 779.5,184.69 780.0,184.82 780.5,184.97 781.0,185.13 781.5,185.31 782.0,185.49 782.5,185.69 783.0,185.90 783.5,186.12 784.0,186.36 784.5,186.61 785.0,186.87 785.5,187.14 786.0,187.42 786.5,187.72 787.0,188.03 787.5,188.35 788.0,188.69 788.5,189.04 789.0,189.40 789.5,189.77 790.0,190.16 790.5,190.55 791.0,190.97 791.5,191.39 792.0,191.83 792.5,192.28 793.0,192.74 793.5,193.22 794.0,193.71 794.5,194.21 795.0,194.72 795.5,195.25 796.0,195.79 796.5,196.35 797.0,196.91 797.5,197.49 798.0,198.09 798.5,198.69 799.0,199.31 799.5,199.95 800.0,200.60 800.5,201.26 801.0,201.93 801.5,202.62 802.0,203.32 802.5,204.03 803.0,204.76 803.5,205.50 804.0,206.25 804.5,207.02 805.0,207.80 805.5,208.60 806.0,209.40 806.5,210.23 807.0,211.06 807.5,211.91 808.0,212.77 808.5,213.65 809.0,214.54 809.5,215.44 810.0,216.36 810.5,217.29 811.0,218.23 811.5,219.19 812.0,220.16 812.5,221.14 813.0,222.14 813.5,223.15 814.0,224.17 814.5,225.21 815.0,226.26 815.5,227.33 816.0,228.40 816.5,229.49 817.0,230.60 817.5,231.71 818.0,232.84 818.5,233.99 819.0,235.14 819.5,236.31 820.0,237.49 820.5,238.69 821.0,239.89 821.5,241.11 822.0,242.34 822.5,243.59 823.0,244.84 823.5,246.11 824.0,247.39 824.5,248.69 825.0,249.99 825.5,251.31 826.0,252.63 826.5,253.97 827.0,255.33 827.5,256.69 828.0,258.06 828.5,259.45 829.0,260.84 829.5,262.25 830.0,263.67 830.5,265.10 831.0,266.54 831.5,267.99 832.0,269.45 832.5,270.92 833.0,272.39 833.5,273.88 834.0,275.38 834.5,276.89 835.0,278.41 835.5,279.93 836.0,281.47 836.5,283.01 837.0,284.57 837.5,286.13 838.0,287.70 838.5,289.27 839.0,290.86 839.5,292.45 840.0,294.05 840.5,295.66 841.0,297.27 841.5,298.89 842.0,300.52 842.5,302.15 843.0,303.79 843.5,305.44 844.0,307.09 844.5,308.75 845.0,310.41 845.5,312.07 846.0,313.75 846.5,315.42 847.0,317.10 847.5,318.79 848.0,320.48 848.5,322.17 849.0,323.87 849.5,325.57 850.0,327.27 850.5,328.97 851.0,330.68 851.5,332.39 852.0,334.10 852.5,335.82 853.0,337.53 853.5,339.25 854.0,340.97 854.5,342.69 855.0,344.40 855.5,346.12 856.0,347.84 856.5,349.56 857.0,351.28 857.5,353.00 858.0,354.72 858.5,356.43 859.0,358.15 859.5,359.86 860.0,361.57 860.5,363.28 861.0,364.99 861.5,366.69 862.0,368.39 862.5,370.09 863.0,371.78 863.5,373.48 864.0,375.16 864.5,376.85 865.0,378.53 865.5,380.20 866.0,381.87 866.5,383.54 867.0,385.20 867.5,386.85 868.0,388.50 868.5,390.14 869.0,391.78 869.5,393.41 870.0,395.04 870.5,396.65 871.0,398.27 871.5,399.87 872.0,401.47 872.5,403.06 873.0,404.64 873.5,406.21 874.0,407.78 874.5,409.33 875.0,410.88 875.5,412.42 876.0,413.96 876.5,415.48 877.0,416.99 877.5,418.50 878.0,419.99 878.5,421.48 879.0,422.95 879.5,424.42 880.0,425.87 880.5,427.32 881.0,428.75 881.5,430.18 882.0,431.59 882.5,432.99 883.0,434.39 883.5,435.77 884.0,437.14 884.5,438.50 885.0,439.84 885.5,441.18 886.0,442.50 886.5,443.81 887.0,445.11 887.5,446.40 888.0,447.68 888.5,448.94 889.0,450.19 889.5,451.43 890.0,452.66 890.5,453.87 891.0,455.07 891.5,456.26 892.0,457.44 892.5,458.60 893.0,459.75 893.5,460.89 894.0,462.01 894.5,463.13 895.0,464.22 895.5,465.31 896.0,466.38 896.5,467.44 897.0,468.49 897.5,469.52 898.0,470.54 898.5,471.54 899.0,472.53 899.5,473.51 900.0,474.48 900.5,475.43 901.0,476.37 901.5,477.29 902.0,478.20 902.5,479.10 903.0,479.99 903.5,480.86 904.0,481.71 904.5,482.56 905.0,483.39 905.5,484.20 906.0,485.01 906.5,485.80 907.0,486.57 907.5,487.33 908.0,488.08 908.5,488.82 909.0,489.54 909.5,490.25 910.0,490.94 910.5,491.63 911.0,492.29 911.5,492.95 912.0,493.59 912.5,494.22 913.0,494.84 913.5,495.44 914.0,496.03 914.5,496.60 915.0,497.16 915.5,497.71 916.0,498.25 916.5,498.77 917.0,499.28 917.5,499.78 918.0,500.26 918.5,500.73 919.0,501.19 919.5,501.64 920.0,502.07 920.5,502.49 921.0,502.89 921.5,503.29 922.0,503.67 922.5,504.04 923.0,504.39 923.5,504.73 924.0,505.07 924.5,505.38 925.0,505.69 925.5,505.98 926.0,506.26 926.5,506.53 927.0,506.78 927.5,507.03 928.0,507.26 928.5,507.47 929.0,507.68 929.5,507.87 930.0,508.05 930.5,508.22 931.0,508.38 931.5,508.52 932.0,508.65 932.5,508.77 933.0,508.88 933.5,508.98 934.0,509.06 934.5,509.13 935.0,509.19 935.5,509.23 936.0,509.27 936.5,509.29 937.0,509.30 937.5,509.30 938.0,509.28 938.5,509.25 939.0,509.21 939.5,509.16 940.0,509.10 940.5,509.02 941.0,508.94 941.5,508.83 942.0,508.72 942.5,508.60 943.0,508.46 943.5,508.31 944.0,508.15 944.5,507.98 945.0,507.79 945.5,507.59 946.0,507.38 946.5,507.16 947.0,506.92 947.5,506.67 948.0,506.41 948.5,506.14 949.0,505.85 949.5,505.56 950.0,505.24 950.5,504.92 951.0,504.59 951.5,504.24 952.0,503.88 952.5,503.50 953.0,503.12 953.5,502.72 954.0,502.30 954.5,501.88 955.0,501.44 955.5,500.99 956.0,500.53 956.5,500.05 957.0,499.56 957.5,499.06 958.0,498.54 958.5,498.01 959.0,497.47 959.5,496.92 960.0,496.35 960.5,495.77 961.0,495.17 961.5,494.57 962.0,493.95 962.5,493.31 963.0,492.66 963.5,492.00 964.0,491.33 964.5,490.64 965.0,489.94 965.5,489.23 966.0,488.50 966.5,487.76 967.0,487.00 967.5,486.23 968.0,485.45 968.5,484.66 969.0,483.85 969.5,483.03 970.0,482.19 970.5,481.34 971.0,480.48 971.5,479.60 972.0,478.71 972.5,477.81 973.0,476.89 973.5,475.96 974.0,475.02 974.5,474.06 975.0,473.09 975.5,472.10 976.0,471.10 976.5,470.09 977.0,469.07 977.5,468.03 978.0,466.98 978.5,465.91 979.0,464.84 979.5,463.75 980.0,462.64 980.5,461.52 981.0,460.39 981.5,459.25 982.0,458.10 982.5,456.93 983.0,455.74 983.5,454.55 984.0,453.34 984.5,452.12 985.0,450.89 985.5,449.65 986.0,448.39 986.5,447.12 987.0,445.84 987.5,444.55 988.0,443.24 988.5,441.92 989.0,440.59 989.5,439.25 990.0,437.90 990.5,436.54 991.0,435.16 991.5,433.78 992.0,432.38 992.5,430.97 993.0,429.56 993.5,428.13 994.0,426.69 994.5,425.24 995.0,423.78 995.5,422.31 996.0,420.83 996.5,419.34 997.0,417.84 997.5,416.33 998.0,414.81 998.5,413.29 999.0,411.75 999.5,410.20 1000.0,408.65 1000.5,407.09 1001.0,405.52 1001.5,403.94 1002.0,402.36 1002.5,400.77 1003.0,399.17 1003.5,397.56 1004.0,395.94 1004.5,394.32 1005.0,392.69 1005.5,391.06 1006.0,389.42 1006.5,387.77 1007.0,386.12 1007.5,384.46 1008.0,382.80 1008.5,381.13 1009.0,379.46 1009.5,377.78 1010.0,376.10 1010.5,374.42 1011.0,372.73 1011.5,371.03 1012.0,369.34 1012.5,367.64 1013.0,365.94 1013.5,364.23 1014.0,362.52 1014.5,360.81 1015.0,359.10 1015.5,357.38 1016.0,355.67 1016.5,353.95 1017.0,352.23 1017.5,350.51 1018.0,348.80 1018.5,347.08 1019.0,345.36 1019.5,343.64 1020.0,341.92 1020.5,340.20 1021.0,338.48 1021.5,336.76 1022.0,335.05 1022.5,333.34 1023.0,331.62 1023.5,329.91 1024.0,328.21 1024.5,326.50 1025.0,324.80 1025.5,323.10 1026.0,321.41 1026.5,319.72 1027.0,318.03 1027.5,316.34 1028.0,314.66 1028.5,312.99 1029.0,311.32 1029.5,309.65 1030.0,307.99 1030.5,306.34 1031.0,304.69 1031.5,303.04 1032.0,301.40 1032.5,299.77 1033.0,298.15 1033.5,296.53 1034.0,294.92 1034.5,293.31 1035.0,291.72 1035.5,290.13 1036.0,288.54 1036.5,286.97 1037.0,285.40 1037.5,283.85 1038.0,282.30 1038.5,280.76 1039.0,279.22 1039.5,277.70 1040.0,276.19 1040.5,274.68 1041.0,273.19 1041.5,271.70 1042.0,270.22 1042.5,268.76 1043.0,267.30 1043.5,265.86 1044.0,264.42 1044.5,263.00 1045.0,261.58 1045.5,260.18 1046.0,258.79 1046.5,257.40 1047.0,256.03 1047.5,254.68 1048.0,253.33 1048.5,251.99 1049.0,250.67 1049.5,249.36 1050.0,248.06 1050.5,246.77 1051.0,245.49 1051.5,244.23 1052.0,242.97 1052.5,241.74 1053.0,240.51 1053.5,239.29 1054.0,238.09 1054.5,236.90 1055.0,235.73 1055.5,234.56 1056.0,233.41 1056.5,232.27 1057.0,231.15 1057.5,230.04 1058.0,228.94 1058.5,227.85 1059.0,226.78 1059.5,225.72 1060.0,224.67 1060.5,223.64 1061.0,222.62 1061.5,221.62 1062.0,220.62 1062.5,219.65 1063.0,218.68 1063.5,217.73 1064.0,216.79 1064.5,215.86 1065.0,214.95 1065.5,214.05 1066.0,213.17 1066.5,212.30 1067.0,211.44 1067.5,210.60 1068.0,209.77 1068.5,208.95 1069.0,208.15 1069.5,207.36 1070.0,206.58 1070.5,205.82 1071.0,205.07 1071.5,204.33 1072.0,203.61 1072.5,202.90 1073.0,202.20 1073.5,201.52 1074.0,200.85 1074.5,200.20 1075.0,199.56 1075.5,198.93 1076.0,198.31 1076.5,197.71 1077.0,197.12 1077.5,196.54 1078.0,195.98 1078.5,195.43 1079.0,194.90 1079.5,194.37 1080.0,193.86 1080.5,193.37 1081.0,192.88 1081.5,192.41 1082.0,191.95 1082.5,191.51 1083.0,191.07 1083.5,190.65 1084.0,190.25 1084.5,189.85 1085.0,189.47 1085.5,189.10 1086.0,188.75 1086.5,188.40 1087.0,188.07 1087.5,187.75 1088.0,187.45 1088.5,187.16 1089.0,186.88 1089.5,186.61 1090.0,186.35 1090.5,186.11 1091.0,185.88 1091.5,185.66 1092.0,185.45 1092.5,185.26 1093.0,185.08 1093.5,184.91 1094.0,184.75 1094.5,184.61 1095.0,184.48 1095.5,184.36 1096.0,184.25 1096.5,184.16 1097.0,184.07 1097.5,184.00 1098.0,183.94 1098.5,183.90 1099.0,183.86 1099.5,183.84 1100.0,183.83 1100.5,183.83 1101.0,183.85 1101.5,183.87 1102.0,183.91 1102.5,183.96 1103.0,184.03 1103.5,184.10 1104.0,184.19 1104.5,184.29 1105.0,184.40 1105.5,184.53 1106.0,184.66 1106.5,184.81 1107.0,184.97 1107.5,185.15 1108.0,185.33 1108.5,185.53 1109.0,185.74 1109.5,185.96 1110.0,186.20 1110.5,186.45 1111.0,186.71 1111.5,186.98 1112.0,187.27 1112.5,187.56 1113.0,187.87 1113.5,188.20 1114.0,188.53 1114.5,188.88 1115.0,189.24 1115.5,189.61 1116.0,190.00 1116.5,190.40 1117.0,190.81 1117.5,191.24 1118.0,191.67 1118.5,192.12 1119.0,192.59 1119.5,193.06 1120.0,193.55 1120.5,194.05 1121.0,194.57 1121.5,195.10 1122.0,195.64 1122.5,196.19 1123.0,196.76 1123.5,197.34 1124.0,197.94 1124.5,198.54 1125.0,199.16 1125.5,199.80 1126.0,200.44 1126.5,201.10 1127.0,201.78 1127.5,202.47 1128.0,203.17 1128.5,203.88 1129.0,204.61 1129.5,205.35 1130.0,206.10 1130.5,206.87 1131.0,207.65 1131.5,208.45 1132.0,209.26 1132.5,210.08 1133.0,210.91 1133.5,211.76 1134.0,212.63 1134.5,213.50 1135.0,214.39 1135.5,215.30 1136.0,216.21 1136.5,217.14 1137.0,218.09 1137.5,219.04 1138.0,220.01 1138.5,221.00 1139.0,222.00 1139.5,223.01 1140.0,224.03 1140.5,225.07 1141.0,226.12 1141.5,227.18 1142.0,228.26 1142.5,229.35 1143.0,230.46 1143.5,231.57 1144.0,232.70 1144.5,233.85 1145.0,235.00 1145.5,236.17 1146.0,237.35 1146.5,238.55 1147.0,239.75 1147.5,240.97 1148.0,242.20 1148.5,243.45 1149.0,244.70 1149.5,245.97 1150.0,247.25 1150.5,248.55 1151.0,249.85 1151.5,251.17 1152.0,252.50 1152.5,253.84 1153.0,255.19 1153.5,256.55 1154.0,257.93 1154.5,259.31 1155.0,260.71 1155.5,262.11 1156.0,263.53 1156.5,264.96 1157.0,266.40 1157.5,267.85 1158.0,269.31 1158.5,270.78 1159.0,272.26 1159.5,273.75 1160.0,275.25 1160.5,276.76 1161.0,278.27 1161.5,279.80 1162.0,281.34 1162.5,282.88 1163.0,284.43 1163.5,285.99 1164.0,287.56 1164.5,289.14 1165.0,290.73 1165.5,292.32 1166.0,293.92 1166.5,295.52 1167.0,297.14 1167.5,298.76 1168.0,300.39 1168.5,302.02 1169.0,303.66 1169.5,305.31 1170.0,306.96 1170.5,308.62 1171.0,310.28 1171.5,311.95 1172.0,313.62 1172.5,315.29 1173.0,316.98 1173.5,318.66 1174.0,320.35 1174.5,322.04 1175.0,323.74 1175.5,325.44 1176.0,327.14 1176.5,328.85 1177.0,330.55 1177.5,332.26 1178.0,333.98 1178.5,335.69 1179.0,337.41 1179.5,339.12 1180.0,340.84 1180.5,342.56 1181.0,344.28 1181.5,346.00 1182.0,347.72 1182.5,349.44 1183.0,351.16 1183.5,352.87 1184.0,354.59 1184.5,356.31 1185.0,358.02 1185.5,359.74 1186.0,361.45 1186.5,363.16 1187.0,364.86 1187.5,366.57 1188.0,368.27 1188.5,369.97 1189.0,371.66 1189.5,373.35 1190.0,375.04 1190.5,376.73 1191.0,378.40 1191.5,380.08 1192.0,381.75 1192.5,383.42 1193.0,385.08 1193.5,386.73 1194.0,388.38 1194.5,390.02 1195.0,391.66 1195.5,393.29 1196.0,394.92 1196.5,396.54 1197.0,398.15 1197.5,399.75 1198.0,401.35 1198.5,402.94 1199.0,404.52 1199.5,406.09 1200.0,407.66 1200.5,409.22 1201.0,410.77 1201.5,412.31 1202.0,413.84 1202.5,415.36 1203.0,416.88 1203.5,418.38 1204.0,419.88 1204.5,421.36 1205.0,422.84 1205.5,424.30 1206.0,425.76 1206.5,427.20 1207.0,428.64 1207.5,430.06 1208.0,431.48 1208.5,432.88 1209.0,434.27 1209.5,435.65 1210.0,437.02 1210.5,438.38 1211.0,439.73 1211.5,441.06 1212.0,442.39 1212.5,443.70 1213.0,445.00 1213.5,446.29 1214.0,447.56 1214.5,448.83 1215.0,450.08 1215.5,451.32 1216.0,452.55 1216.5,453.76 1217.0,454.96 1217.5,456.15 1218.0,457.33 1218.5,458.49 1219.0,459.64 1219.5,460.78 1220.0,461.90 1220.5,463.02 1221.0,464.11 1221.5,465.20 1222.0,466.27 1222.5,467.33 1223.0,468.38 1223.5,469.41 1224.0,470.43 1224.5,471.43 1225.0,472.43 1225.5,473.40 1226.0,474.37 1226.5,475.32 1227.0,476.26 1227.5,477.19 1228.0,478.10 1228.5,478.99 1229.0,479.88 1229.5,480.75 1230.0,481.61 1230.5,482.45 1231.0,483.28 1231.5,484.10 1232.0,484.90 1232.5,485.69 1233.0,486.47 1233.5,487.23 1234.0,487.98 1234.5,488.71 1235.0,489.44 1235.5,490.14 1236.0,490.84 1236.5,491.52 1237.0,492.19 1237.5,492.85 1238.0,493.49 1238.5,494.12 1239.0,494.73 1239.5,495.33 1240.0,495.92 1240.5,496.50 1241.0,497.06 1241.5,497.61 1242.0,498.15 1242.5,498.67 1243.0,499.18 1243.5,499.68 1244.0,500.16 1244.5,500.63 1245.0,501.09 1245.5,501.53 1246.0,501.97 1246.5,502.39 1247.0,502.79 1247.5,503.19 1248.0,503.57 1248.5,503.94 1249.0,504.29 1249.5,504.63 1250.0,504.97 1250.5,505.28 1251.0,505.59 1251.5,505.88 1252.0,506.16 1252.5,506.43 1253.0,506.68 1253.5,506.93 1254.0,507.16 1254.5,507.38 1255.0,507.58 1255.5,507.77 1256.0,507.96 1256.5,508.12 1257.0,508.28 1257.5,508.42 1258.0,508.56 1258.5,508.68 1259.0,508.78 1259.5,508.88 1260.0,508.96 1260.5,509.03 1261.0,509.09 1261.5,509.14 1262.0,509.17 1262.5,509.19 1263.0,509.20 1263.5,509.20 1264.0,509.19 1264.5,509.16 1265.0,509.12 1265.5,509.07 1266.0,509.00 1266.5,508.93 1267.0,508.84 1267.5,508.74 1268.0,508.63 1268.5,508.50 1269.0,508.37 1269.5,508.22 1270.0,508.06 1270.5,507.88 1271.0,507.70 1271.5,507.50 1272.0,507.29 1272.5,507.06 1273.0,506.83 1273.5,506.58 1274.0,506.32 1274.5,506.05 1275.0,505.76 1275.5,505.46 1276.0,505.15 1276.5,504.83 1277.0,504.49 1277.5,504.15 1278.0,503.79 1278.5,503.41 1279.0,503.03 1279.5,502.63 1280.0,502.21 1280.5,501.79 1281.0,501.35 1281.5,500.90 1282.0,500.44 1282.5,499.96 1283.0,499.47 1283.5,498.97 1284.0,498.45 1284.5,497.93 1285.0,497.38 1285.5,496.83 1286.0,496.26 1286.5,495.68 1287.0,495.09 1287.5,494.48 1288.0,493.86 1288.5,493.22 1289.0,492.58 1289.5,491.92 1290.0,491.24 1290.5,490.55 1291.0,489.85 1291.5,489.14 1292.0,488.41 1292.5,487.67 1293.0,486.92 1293.5,486.15 1294.0,485.37 1294.5,484.57 1295.0,483.76 1295.5,482.94 1296.0,482.10 1296.5,481.25 1297.0,480.39 1297.5,479.52 1298.0,478.63 1298.5,477.72 1299.0,476.81 1299.5,475.87 1300.0,474.93 1300.5,473.97 1301.0,473.00 1301.5,472.02 1302.0,471.02 1302.5,470.01 1303.0,468.98 1303.5,467.95 1304.0,466.90 1304.5,465.83 1305.0,464.75 1305.5,463.66 1306.0,462.56 1306.5,461.44 1307.0,460.31 1307.5,459.17 1308.0,458.01 1308.5,456.84 1309.0,455.66 1309.5,454.47 1310.0,453.26 1310.5,452.04 1311.0,450.81 1311.5,449.57 1312.0,448.31 1312.5,447.04 1313.0,445.76 1313.5,444.47 1314.0,443.16 1314.5,441.84 1315.0,440.51 1315.5,439.17 1316.0,437.82 1316.5,436.46 1317.0,435.08 1317.5,433.70 1318.0,432.30 1318.5,430.90 1319.0,429.48 1319.5,428.05 1320.0,426.61 1320.5,425.16 1321.0,423.70 1321.5,422.23 1322.0,420.75 1322.5,419.26 1323.0,417.76 1323.5,416.25 1324.0,414.73 1324.5,413.21 1325.0,411.67 1325.5,410.13 1326.0,408.57 1326.5,407.01 1327.0,405.44 1327.5,403.87 1328.0,402.28 1328.5,400.69 1329.0,399.09 1329.5,397.48 1330.0,395.87 1330.5,394.25 1331.0,392.62 1331.5,390.98 1332.0,389.34 1332.5,387.70 1333.0,386.05 1333.5,384.39 1334.0,382.73 1334.5,381.06 1335.0,379.39 1335.5,377.71 1336.0,376.03 1336.5,374.34 1337.0,372.65 1337.5,370.96 1338.0,369.26 1338.5,367.56 1339.0,365.86 1339.5,364.16 1340.0,362.45 1340.5,360.74 1341.0,359.02 1341.5,357.31 1342.0,355.60 1342.5,353.88 1343.0,352.16 1343.5,350.44 1344.0,348.72 1344.5,347.00 1345.0,345.28 1345.5,343.56 1346.0,341.84 1346.5,340.13 1347.0,338.41 1347.5,336.69 1348.0,334.98 1348.5,333.26 1349.0,331.55 1349.5,329.84 1350.0,328.14 1350.5,326.43 1351.0,324.73 1351.5,323.03 1352.0,321.34 1352.5,319.64 1353.0,317.96 1353.5,316.27 1354.0,314.59 1354.5,312.92 1355.0,311.25 1355.5,309.58 1356.0,307.92 1356.5,306.27 1357.0,304.62 1357.5,302.97 1358.0,301.34 1358.5,299.70 1359.0,298.08 1359.5,296.46 1360.0,294.85 1360.5,293.24 1361.0,291.65 1361.5,290.06 1362.0,288.48 1362.5,286.90 1363.0,285.34 1363.5,283.78 1364.0,282.23 1364.5,280.69 1365.0,279.15 1365.5,277.63 1366.0,276.12 1366.5,274.61 1367.0,273.12 1367.5,271.63 1368.0,270.16 1368.5,268.69 1369.0,267.23 1369.5,265.79 1370.0,264.35 1370.5,262.93 1371.0,261.51 1371.5,260.11 1372.0,258.72 1372.5,257.34 1373.0,255.97 1373.5,254.61 1374.0,253.26 1374.5,251.93 1375.0,250.60 1375.5,249.29 1376.0,247.99 1376.5,246.70 1377.0,245.43 1377.5,244.16 1378.0,242.91 1378.5,241.67 1379.0,240.44 1379.5,239.23 1380.0,238.03 1380.5,236.84 1381.0,235.66 1381.5,234.50 1382.0,233.35 1382.5,232.21 1383.0,231.08 1383.5,229.97 1384.0,228.87 1384.5,227.79 1385.0,226.72 1385.5,225.66 1386.0,224.61 1386.5,223.58 1387.0,222.56 1387.5,221.55 1388.0,220.56 1388.5,219.58 1389.0,218.62 1389.5,217.66 1390.0,216.73 1390.5,215.80 1391.0,214.89 1391.5,213.99 1392.0,213.11 1392.5,212.24 1393.0,211.38 1393.5,210.53 1394.0,209.70 1394.5,208.89 1395.0,208.08 1395.5,207.29 1396.0,206.52 1396.5,205.76 1397.0,205.01 1397.5,204.27 1398.0,203.55 1398.5,202.84 1399.0,202.14 1399.5,201.46 1400.0,200.79 1400.5,200.14 1401.0,199.50 1401.5,198.87 1402.0,198.25 1402.5,197.65 1403.0,197.06 1403.5,196.48 1404.0,195.92 1404.5,195.37 1405.0,194.84 1405.5,194.31 1406.0,193.80 1406.5,193.31 1407.0,192.82 1407.5,192.35 1408.0,191.89 1408.5,191.45 1409.0,191.01 1409.5,190.60 1410.0,190.19 1410.5,189.79 1411.0,189.41 1411.5,189.04 1412.0,188.69 1412.5,188.35 1413.0,188.01 1413.5,187.70 1414.0,187.39 1414.5,187.10 1415.0,186.82 1415.5,186.55 1416.0,186.29 1416.5,186.05 1417.0,185.82 1417.5,185.60 1418.0,185.40 1418.5,185.20 1419.0,185.02 1419.5,184.85 1420.0,184.70 1420.5,184.55 1421.0,184.42 1421.5,184.30 1422.0,184.19 1422.5,184.10 1423.0,184.02 1423.5,183.95 1424.0,183.89 1424.5,183.84 1425.0,183.81 1425.5,183.78 1426.0,183.77 1426.5,183.78 1427.0,183.79 1427.5,183.82 1428.0,183.86 1428.5,183.91 1429.0,183.97 1429.5,184.05 1430.0,184.13 1430.5,184.23 1431.0,184.35 1431.5,184.47 1432.0,184.61 1432.5,184.76 1433.0,184.92 1433.5,185.09 1434.0,185.28 1434.5,185.48 1435.0,185.69 1435.5,185.91 1436.0,186.15 1436.5,186.39 1437.0,186.65 1437.5,186.93 1438.0,187.21 1438.5,187.51 1439.0,187.82 1439.5,188.14 1440.0,188.48 1440.5,188.83 1441.0,189.19 1441.5,189.56 1442.0,189.95 1442.5,190.35 1443.0,190.76 1443.5,191.18 1444.0,191.62 1444.5,192.07 1445.0,192.53 1445.5,193.01 1446.0,193.50 1446.5,194.00 1447.0,194.52 1447.5,195.05 1448.0,195.59 1448.5,196.14 1449.0,196.71 1449.5,197.29 1450.0,197.88 1450.5,198.49 1451.0,199.11 1451.5,199.75 1452.0,200.39 1452.5,201.05 1453.0,201.73 1453.5,202.42 1454.0,203.12 1454.5,203.83 1455.0,204.56 1455.5,205.30 1456.0,206.05 1456.5,206.82 1457.0,207.60 1457.5,208.40 1458.0,209.21 1458.5,210.03 1459.0,210.86 1459.5,211.71 1460.0,212.58 1460.5,213.45 1461.0,214.34 1461.5,215.25 1462.0,216.16 1462.5,217.09 1463.0,218.04 1463.5,218.99 1464.0,219.96 1464.5,220.95 1465.0,221.95 1465.5,222.96 1466.0,223.98 1466.5,225.02 1467.0,226.07 1467.5,227.14 1468.0,228.21 1468.5,229.30 1469.0,230.41 1469.5,231.52 1470.0,232.65 1470.5,233.80 1471.0,234.95 1471.5,236.12 1472.0,237.30 1472.5,238.50 1473.0,239.70 1473.5,240.92 1474.0,242.16 1474.5,243.40 1475.0,244.66 1475.5,245.93 1476.0,247.21 1476.5,248.50 1477.0,249.80 1477.5,251.12 1478.0,252.45 1478.5,253.79 1479.0,255.14 1479.5,256.50 1480.0,257.88 1480.5,259.26 1481.0,260.66 1481.5,262.07 1482.0,263.49 1482.5,264.92 1483.0,266.35 1483.5,267.80 1484.0,269.26 1484.5,270.73 1485.0,272.21 1485.5,273.70 1486.0,275.20 1486.5,276.71 1487.0,278.23 1487.5,279.76 1488.0,281.29 1488.5,282.83 1489.0,284.39 1489.5,285.95 1490.0,287.52 1490.5,289.10 1491.0,290.68 1491.5,292.27 1492.0,293.87 1492.5,295.48 1493.0,297.09 1493.5,298.72 1494.0,300.34 1494.5,301.98 1495.0,303.62 1495.5,305.26 1496.0,306.91 1496.5,308.57 1497.0,310.23 1497.5,311.90 1498.0,313.57 1498.5,315.25 1499.0,316.93 1499.5,318.62 1500.0,320.31 1500.5,322.00 1501.0,323.70 1501.5,325.40 1502.0,327.10 1502.5,328.80 1503.0,330.51 1503.5,332.22 1504.0,333.93 1504.5,335.65 1505.0,337.36 1505.5,339.08 1506.0,340.80 1506.5,342.52 1507.0,344.24 1507.5,345.96 1508.0,347.68 1508.5,349.39 1509.0,351.11 1509.5,352.83 1510.0,354.55 1510.5,356.27 1511.0,357.98 1511.5,359.69 1512.0,361.41 1512.5,363.11 1513.0,364.82 1513.5,366.53 1514.0,368.23 1514.5,369.93 1515.0,371.62 1515.5,373.31 1516.0,375.00 1516.5,376.68 1517.0,378.36 1517.5,380.04 1518.0,381.71 1518.5,383.37 1519.0,385.04 1519.5,386.69 1520.0,388.34 1520.5,389.98 1521.0,391.62 1521.5,393.25 1522.0,394.88 1522.5,396.50 1523.0,398.11 1523.5,399.71 1524.0,401.31 1524.5,402.90 1525.0,404.48 1525.5,406.05 1526.0,407.62 1526.5,409.18 1527.0,410.73 1527.5,412.27 1528.0,413.80 1528.5,415.32 1529.0,416.84 1529.5,418.34 1530.0,419.84 1530.5,421.32 1531.0,422.80 1531.5,424.26 1532.0,425.72 1532.5,427.16 1533.0,428.60 1533.5,430.02 1534.0,431.44 1534.5,432.84 1535.0,434.23 1535.5,435.61 1536.0,436.98 1536.5,438.34 1537.0,439.69 1537.5,441.03 1538.0,442.35 1538.5,443.66 1539.0,444.96 1539.5,446.25 1540.0,447.53 1540.5,448.79 1541.0,450.04 1541.5,451.28 1542.0,452.51 1542.5,453.72 1543.0,454.92 1543.5,456.11 1544.0,457.29 1544.5,458.45 1545.0,459.60 1545.5,460.74 1546.0,461.87 1546.5,462.98 1547.0,464.08 1547.5,465.16 1548.0,466.24 1548.5,467.29 1549.0,468.34 1549.5,469.37 1550.0,470.39 1550.5,471.40 1551.0,472.39 1551.5,473.37 1552.0,474.33 1552.5,475.29 1553.0,476.22 1553.5,477.15 1554.0,478.06 1554.5,478.96 1555.0,479.84 1555.5,480.71 1556.0,481.57 1556.5,482.41 1557.0,483.25 1557.5,484.06 1558.0,484.87 1558.5,485.65 1559.0,486.43 1559.5,487.19 1560.0,487.94 1560.5,488.68 1561.0,489.40 1561.5,490.11 1562.0,490.80 1562.5,491.49 1563.0,492.16 1563.5,492.81 1564.0,493.45 1564.5,494.08 1565.0,494.70 1565.5,495.30 1566.0,495.89 1566.5,496.46 1567.0,497.03 1567.5,497.57 1568.0,498.11 1568.5,498.63 1569.0,499.14 1569.5,499.64 1570.0,500.13 1570.5,500.60 1571.0,501.05 1571.5,501.50 1572.0,501.93 1572.5,502.35 1573.0,502.76 1573.5,503.15 1574.0,503.53 1574.5,503.90 1575.0,504.26 1575.5,504.60 1576.0,504.93 1576.5,505.25 1577.0,505.55 1577.5,505.85 1578.0,506.13 1578.5,506.40 1579.0,506.65 1579.5,506.89 1580.0,507.12 1580.5,507.34 1581.0,507.55 1581.5,507.74 1582.0,507.92 1582.5,508.09 1583.0,508.25 1583.5,508.39 1584.0,508.52 1584.5,508.64 1585.0,508.75 1585.5,508.85 1586.0,508.93 1586.5,509.00 1587.0,509.06 1587.5,509.10 1588.0,509.14 1588.5,509.16 1589.0,509.17 1589.5,509.17 1590.0,509.15 1590.5,509.13 1591.0,509.09 1591.5,509.04 1592.0,508.97 1592.5,508.90 1593.0,508.81 1593.5,508.71 1594.0,508.60 1594.5,508.47 1595.0,508.34 1595.5,508.19 1596.0,508.02 1596.5,507.85 1597.0,507.67 1597.5,507.47 1598.0,507.26 1598.5,507.03 1599.0,506.80 1599.5,506.55 1600.0,506.29 1600.5,506.02 1601.0,505.73 1601.5,505.43 1602.0,505.12 1602.5,504.80 1603.0,504.46 1603.5,504.12 1604.0,503.75 1604.5,503.38 1605.0,502.99 1605.5,502.60 1606.0,502.18 1606.5,501.76 1607.0,501.32 1607.5,500.87 1608.0,500.41 1608.5,499.93 1609.0,499.44 1609.5,498.94 1610.0,498.42 1610.5,497.90 1611.0,497.35 1611.5,496.80 1612.0,496.23 1612.5,495.65 1613.0,495.06 1613.5,494.45 1614.0,493.83 1614.5,493.19 1615.0,492.55 1615.5,491.89 1616.0,491.21 1616.5,490.53 1617.0,489.82 1617.5,489.11 1618.0,488.38 1618.5,487.64 1619.0,486.89 1619.5,486.12 1620.0,485.34 1620.5,484.54 1621.0,483.73 1621.5,482.91 1622.0,482.08 1622.5,481.23 1623.0,480.36 1623.5,479.49 1624.0,478.60 1624.5,477.69 1625.0,476.78 1625.5,475.85 1626.0,474.90 1626.5,473.95 1627.0,472.97 1627.5,471.99 1628.0,470.99 1628.5,469.98 1629.0,468.96 1629.5,467.92 1630.0,466.87 1630.5,465.80 1631.0,464.73 1631.5,463.63 1632.0,462.53 1632.5,461.41 1633.0,460.28 1633.5,459.14 1634.0,457.99 1634.5,456.82 1635.0,455.63 1635.5,454.44 1636.0,453.23 1636.5,452.01 1637.0,450.78 1637.5,449.54 1638.0,448.28 1638.5,447.01 1639.0,445.73 1639.5,444.44 1640.0,443.13 1640.5,441.82 1641.0,440.49 1641.5,439.15 1642.0,437.80 1642.5,436.43 1643.0,435.06 1643.5,433.67 1644.0,432.28 1644.5,430.87 1645.0,429.45 1645.5,428.02 1646.0,426.58 1646.5,425.13 1647.0,423.67 1647.5,422.20 1648.0,420.72 1648.5,419.23 1649.0,417.73 1649.5,416.23 1650.0,414.71 1650.5,413.18 1651.0,411.65 1651.5,410.10 1652.0,408.55 1652.5,406.99" stroke="#00FF00" stroke-width="1.1" fill="none" clip-path="url(#c1)"/>
<polyline points="56.5,422.32 57.0,420.75 57.5,419.16 58.0,417.57 58.5,415.97 59.0,414.36 59.5,412.74 60.0,411.11 60.5,409.48 61.0,407.84 61.5,406.20 62.0,404.54 62.5,402.88 63.0,401.22 63.5,399.55 64.0,397.87 64.5,396.18 65.0,394.50 65.5,392.80 66.0,391.10 66.5,389.40 67.0,387.69 67.5,385.98 68.0,384.26 68.5,382.54 69.0,380.82 69.5,379.09 70.0,377.36 70.5,375.62 71.0,373.89 71.5,372.15 72.0,370.41 72.5,368.66 73.0,366.92 73.5,365.17 74.0,363.43 74.5,361.68 75.0,359.93 75.5,358.18 76.0,356.43 76.5,354.68 77.0,352.93 77.5,351.18 78.0,349.43 78.5,347.68 79.0,345.93 79.5,344.19 80.0,342.44 80.5,340.70 81.0,338.96 81.5,337.23 82.0,335.49 82.5,333.76 83.0,332.03 83.5,330.30 84.0,328.58 84.5,326.86 85.0,325.15 85.5,323.44 86.0,321.73 86.5,320.03 87.0,318.34 87.5,316.65 88.0,314.96 88.5,313.28 89.0,311.61 89.5,309.94 90.0,308.28 90.5,306.62 91.0,304.97 91.5,303.33 92.0,301.70 92.5,300.07 93.0,298.45 93.5,296.84 94.0,295.24 94.5,293.64 95.0,292.05 95.5,290.47 96.0,288.90 96.5,287.34 97.0,285.79 97.5,284.24 98.0,282.71 98.5,281.18 99.0,279.67 99.5,278.16 100.0,276.67 100.5,275.18 101.0,273.71 101.5,272.24 102.0,270.79 102.5,269.34 103.0,267.91 103.5,266.49 104.0,265.08 104.5,263.68 105.0,262.29 105.5,260.91 106.0,259.55 106.5,258.20 107.0,256.86 107.5,255.53 108.0,254.21 108.5,252.90 109.0,251.61 109.5,250.33 110.0,249.06 110.5,247.81 111.0,246.56 111.5,245.33 112.0,244.12 112.5,242.91 113.0,241.72 113.5,240.54 114.0,239.37 114.5,238.22 115.0,237.08 115.5,235.95 116.0,234.84 116.5,233.74 117.0,232.65 117.5,231.58 118.0,230.52 118.5,229.47 119.0,228.44 119.5,227.42 120.0,226.41 120.5,225.42 121.0,224.44 121.5,223.48 122.0,222.53 122.5,221.59 123.0,220.66 123.5,219.75 124.0,218.85 124.5,217.97 125.0,217.10 125.5,216.24 126.0,215.40 126.5,214.57 127.0,213.76 127.5,212.95 128.0,212.16 128.5,211.39 129.0,210.63 129.5,209.88 130.0,209.15 130.5,208.43 131.0,207.72 131.5,207.02 132.0,206.34 132.5,205.68 133.0,205.02 133.5,204.38 134.0,203.76 134.5,203.14 135.0,202.54 135.5,201.96 136.0,201.38 136.5,200.82 137.0,200.28 137.5,199.74 138.0,199.22 138.5,198.71 139.0,198.22 139.5,197.74 140.0,197.27 140.5,196.81 141.0,196.37 141.5,195.94 142.0,195.52 142.5,195.12 143.0,194.73 143.5,194.35 144.0,193.98 144.5,193.63 145.0,193.29 145.5,192.96 146.0,192.65 146.5,192.34 147.0,192.05 147.5,191.78 148.0,191.51 148.5,191.26 149.0,191.02 149.5,190.79 150.0,190.58 150.5,190.38 151.0,190.19 151.5,190.01 152.0,189.84 152.5,189.69 153.0,189.55 153.5,189.42 154.0,189.30 154.5,189.20 155.0,189.11 155.5,189.03 156.0,188.96 156.5,188.91 157.0,188.86 157.5,188.83 158.0,188.82 158.5,188.81 159.0,188.82 159.5,188.84 160.0,188.87 160.5,188.91 161.0,188.97 161.5,189.03 162.0,189.11 162.5,189.21 163.0,189.31 163.5,189.43 164.0,189.56 164.5,189.70 165.0,189.85 165.5,190.02 166.0,190.20 166.5,190.39 167.0,190.59 167.5,190.81 168.0,191.04 168.5,191.28 169.0,191.53 169.5,191.80 170.0,192.08 170.5,192.37 171.0,192.67 171.5,192.99 172.0,193.32 172.5,193.66 173.0,194.01 173.5,194.38 174.0,194.76 174.5,195.15 175.0,195.56 175.5,195.98 176.0,196.41 176.5,196.86 177.0,197.31 177.5,197.78 178.0,198.27 178.5,198.76 179.0,199.27 179.5,199.80 180.0,200.33 180.5,200.88 181.0,201.44 181.5,202.02 182.0,202.61 182.5,203.21 183.0,203.83 183.5,204.46 184.0,205.10 184.5,205.75 185.0,206.42 185.5,207.11 186.0,207.80 186.5,208.51 187.0,209.23 187.5,209.97 188.0,210.72 188.5,211.48 189.0,212.26 189.5,213.05 190.0,213.86 190.5,214.67 191.0,215.51 191.5,216.35 192.0,217.21 192.5,218.08 193.0,218.97 193.5,219.87 194.0,220.78 194.5,221.71 195.0,222.65 195.5,223.60 196.0,224.57 196.5,225.55 197.0,226.54 197.5,227.55 198.0,228.57 198.5,229.60 199.0,230.65 199.5,231.71 200.0,232.79 200.5,233.87 201.0,234.97 201.5,236.09 202.0,237.21 202.5,238.35 203.0,239.50 203.5,240.67 204.0,241.85 204.5,243.04 205.0,244.24 205.5,245.46 206.0,246.69 206.5,247.93 207.0,249.18 207.5,250.45 208.0,251.72 208.5,253.01 209.0,254.31 209.5,255.63 210.0,256.95 210.5,258.29 211.0,259.64 211.5,261.00 212.0,262.37 212.5,263.75 213.0,265.14 213.5,266.55 214.0,267.96 214.5,269.39 215.0,270.82 215.5,272.27 216.0,273.72 216.5,275.19 217.0,276.67 217.5,278.15 218.0,279.65 218.5,281.15 219.0,282.66 219.5,284.19 220.0,285.72 220.5,287.26 221.0,288.81 221.5,290.36 222.0,291.93 222.5,293.50 223.0,295.08 223.5,296.67 224.0,298.27 224.5,299.87 225.0,301.48 225.5,303.10 226.0,304.72 226.5,306.35 227.0,307.98 227.5,309.63 228.0,311.27 228.5,312.92 229.0,314.58 229.5,316.24 230.0,317.91 230.5,319.58 231.0,321.26 231.5,322.94 232.0,324.62 232.5,326.31 233.0,328.00 233.5,329.70 234.0,331.39 234.5,333.09 235.0,334.80 235.5,336.50 236.0,338.21 236.5,339.91 237.0,341.62 237.5,343.33 238.0,345.05 238.5,346.76 239.0,348.47 239.5,350.18 240.0,351.90 240.5,353.61 241.0,355.32 241.5,357.03 242.0,358.75 242.5,360.45 243.0,362.16 243.5,363.87 244.0,365.57 244.5,367.28 245.0,368.98 245.5,370.67 246.0,372.37 246.5,374.06 247.0,375.75 247.5,377.43 248.0,379.11 248.5,380.79 249.0,382.46 249.5,384.12 250.0,385.79 250.5,387.44 251.0,389.10 251.5,390.74 252.0,392.39 252.5,394.02 253.0,395.65 253.5,397.27 254.0,398.89 254.5,400.50 255.0,402.10 255.5,403.70 256.0,405.29 256.5,406.87 257.0,408.44 257.5,410.01 258.0,411.56 258.5,413.11 259.0,414.65 259.5,416.18 260.0,417.71 260.5,419.22 261.0,420.73 261.5,422.22 262.0,423.71 262.5,425.18 263.0,426.65 263.5,428.11 264.0,429.55 264.5,430.99 265.0,432.41 265.5,433.83 266.0,435.23 266.5,436.63 267.0,438.01 267.5,439.38 268.0,440.74 268.5,442.09 269.0,443.43 269.5,444.75 270.0,446.07 270.5,447.37 271.0,448.66 271.5,449.94 272.0,451.20 272.5,452.46 273.0,453.70 273.5,454.93 274.0,456.15 274.5,457.35 275.0,458.54 275.5,459.72 276.0,460.89 276.5,462.04 277.0,463.18 277.5,464.31 278.0,465.42 278.5,466.52 279.0,467.61 279.5,468.69 280.0,469.75 280.5,470.80 281.0,471.84 281.5,472.86 282.0,473.87 282.5,474.86 283.0,475.84 283.5,476.81 284.0,477.77 284.5,478.71 285.0,479.64 285.5,480.55 286.0,481.46 286.5,482.34 287.0,483.22 287.5,484.08 288.0,484.93 288.5,485.76 289.0,486.58 289.5,487.39 290.0,488.18 290.5,488.96 291.0,489.73 291.5,490.48 292.0,491.22 292.5,491.94 293.0,492.66 293.5,493.36 294.0,494.04 294.5,494.71 295.0,495.37 295.5,496.02 296.0,496.65 296.5,497.27 297.0,497.87 297.5,498.47 298.0,499.05 298.5,499.61 299.0,500.16 299.5,500.70 300.0,501.23 300.5,501.74 301.0,502.25 301.5,502.73 302.0,503.21 302.5,503.67 303.0,504.12 303.5,504.55 304.0,504.98 304.5,505.39 305.0,505.78 305.5,506.17 306.0,506.54 306.5,506.90 307.0,507.25 307.5,507.58 308.0,507.90 308.5,508.21 309.0,508.51 309.5,508.79 310.0,509.06 310.5,509.32 311.0,509.57 311.5,509.80 312.0,510.02 312.5,510.23 313.0,510.43 313.5,510.61 314.0,510.79 314.5,510.95 315.0,511.09 315.5,511.23 316.0,511.35 316.5,511.46 317.0,511.56 317.5,511.65 318.0,511.72 318.5,511.78 319.0,511.83 319.5,511.87 320.0,511.90 320.5,511.91 321.0,511.91 321.5,511.90 322.0,511.88 322.5,511.84 323.0,511.79 323.5,511.73 324.0,511.66 324.5,511.58 325.0,511.48 325.5,511.37 326.0,511.25 326.5,511.12 327.0,510.97 327.5,510.82 328.0,510.65 328.5,510.46 329.0,510.27 329.5,510.06 330.0,509.84 330.5,509.61 331.0,509.37 331.5,509.11 332.0,508.84 332.5,508.56 333.0,508.27 333.5,507.96 334.0,507.64 334.5,507.31 335.0,506.97 335.5,506.61 336.0,506.24 336.5,505.86 337.0,505.46 337.5,505.05 338.0,504.63 338.5,504.20 339.0,503.75 339.5,503.30 340.0,502.82 340.5,502.34 341.0,501.84 341.5,501.33 342.0,500.81 342.5,500.27 343.0,499.72 343.5,499.16 344.0,498.58 344.5,497.99 345.0,497.39 345.5,496.77 346.0,496.14 346.5,495.50 347.0,494.84 347.5,494.17 348.0,493.49 348.5,492.79 349.0,492.08 349.5,491.36 350.0,490.63 350.5,489.88 351.0,489.11 351.5,488.34 352.0,487.55 352.5,486.74 353.0,485.92 353.5,485.09 354.0,484.25 354.5,483.39 355.0,482.52 355.5,481.64 356.0,480.74 356.5,479.82 357.0,478.90 357.5,477.96 358.0,477.01 358.5,476.04 359.0,475.06 359.5,474.07 360.0,473.06 360.5,472.04 361.0,471.01 361.5,469.96 362.0,468.91 362.5,467.83 363.0,466.75 363.5,465.65 364.0,464.54 364.5,463.41 365.0,462.27 365.5,461.12 366.0,459.96 366.5,458.78 367.0,457.59 367.5,456.39 368.0,455.17 368.5,453.95 369.0,452.71 369.5,451.45 370.0,450.19 370.5,448.91 371.0,447.62 371.5,446.32 372.0,445.01 372.5,443.68 373.0,442.35 373.5,441.00 374.0,439.64 374.5,438.27 375.0,436.89 375.5,435.50 376.0,434.09 376.5,432.68 377.0,431.25 377.5,429.82 378.0,428.37 378.5,426.91 379.0,425.45 379.5,423.97 380.0,422.48 380.5,420.99 381.0,419.48 381.5,417.97 382.0,416.44 382.5,414.91 383.0,413.37 383.5,411.82 384.0,410.26 384.5,408.69 385.0,407.12 385.5,405.53 386.0,403.94 386.5,402.34 387.0,400.74 387.5,399.12 388.0,397.50 388.5,395.88 389.0,394.24 389.5,392.61 390.0,390.96 390.5,389.31 391.0,387.65 391.5,385.99 392.0,384.32 392.5,382.65 393.0,380.97 393.5,379.29 394.0,377.61 394.5,375.92 395.0,374.22 395.5,372.53 396.0,370.83 396.5,369.12 397.0,367.42 397.5,365.71 398.0,364.00 398.5,362.28 399.0,360.57 399.5,358.85 400.0,357.13 400.5,355.41 401.0,353.69 401.5,351.97 402.0,350.25 402.5,348.52 403.0,346.80 403.5,345.08 404.0,343.36 404.5,341.64 405.0,339.92 405.5,338.20 406.0,336.48 406.5,334.77 407.0,333.05 407.5,331.34 408.0,329.63 408.5,327.93 409.0,326.23 409.5,324.53 410.0,322.83 410.5,321.14 411.0,319.45 411.5,317.76 412.0,316.08 412.5,314.41 413.0,312.74 413.5,311.07 414.0,309.41 414.5,307.75 415.0,306.10 415.5,304.46 416.0,302.82 416.5,301.19 417.0,299.57 417.5,297.95 418.0,296.34 418.5,294.73 419.0,293.14 419.5,291.55 420.0,289.97 420.5,288.39 421.0,286.83 421.5,285.27 422.0,283.72 422.5,282.18 423.0,280.65 423.5,279.13 424.0,277.62 424.5,276.11 425.0,274.62 425.5,273.14 426.0,271.66 426.5,270.20 427.0,268.74 427.5,267.30 428.0,265.87 428.5,264.44 429.0,263.03 429.5,261.63 430.0,260.24 430.5,258.86 431.0,257.49 431.5,256.14 432.0,254.79 432.5,253.46 433.0,252.14 433.5,250.83 434.0,249.53 434.5,248.24 435.0,246.97 435.5,245.71 436.0,244.46 436.5,243.22 437.0,242.00 437.5,240.79 438.0,239.59 438.5,238.40 439.0,237.23 439.5,236.07 440.0,234.92 440.5,233.78 441.0,232.66 441.5,231.55 442.0,230.46 442.5,229.38 443.0,228.31 443.5,227.25 444.0,226.21 444.5,225.18 445.0,224.16 445.5,223.16 446.0,222.17 446.5,221.19 447.0,220.23 447.5,219.28 448.0,218.35 448.5,217.43 449.0,216.52 449.5,215.62 450.0,214.74 450.5,213.87 451.0,213.02 451.5,212.18 452.0,211.35 452.5,210.54 453.0,209.74 453.5,208.95 454.0,208.18 454.5,207.42 455.0,206.67 455.5,205.94 456.0,205.22 456.5,204.52 457.0,203.82 457.5,203.15 458.0,202.48 458.5,201.83 459.0,201.19 459.5,200.56 460.0,199.95 460.5,199.35 461.0,198.77 461.5,198.19 462.0,197.63 462.5,197.09 463.0,196.56 463.5,196.04 464.0,195.53 464.5,195.03 465.0,194.55 465.5,194.09 466.0,193.63 466.5,193.19 467.0,192.76 467.5,192.34 468.0,191.94 468.5,191.55 469.0,191.17 469.5,190.80 470.0,190.45 470.5,190.11 471.0,189.78 471.5,189.47 472.0,189.17 472.5,188.88 473.0,188.60 473.5,188.33 474.0,188.08 474.5,187.84 475.0,187.61 475.5,187.40 476.0,187.19 476.5,187.00 477.0,186.83 477.5,186.66 478.0,186.51 478.5,186.37 479.0,186.24 479.5,186.12 480.0,186.01 480.5,185.92 481.0,185.84 481.5,185.77 482.0,185.72 482.5,185.68 483.0,185.64 483.5,185.63 484.0,185.62 484.5,185.62 485.0,185.64 485.5,185.67 486.0,185.71 486.5,185.77 487.0,185.83 487.5,185.91 488.0,186.00 488.5,186.11 489.0,186.22 489.5,186.35 490.0,186.49 490.5,186.64 491.0,186.80 491.5,186.98 492.0,187.17 492.5,187.37 493.0,187.58 493.5,187.81 494.0,188.05 494.5,188.30 495.0,188.56 495.5,188.84 496.0,189.13 496.5,189.43 497.0,189.74 497.5,190.07 498.0,190.41 498.5,190.76 499.0,191.12 499.5,191.50 500.0,191.89 500.5,192.29 501.0,192.71 501.5,193.13 502.0,193.57 502.5,194.03 503.0,194.49 503.5,194.97 504.0,195.47 504.5,195.97 505.0,196.49 505.5,197.02 506.0,197.57 506.5,198.13 507.0,198.70 507.5,199.28 508.0,199.88 508.5,200.49 509.0,201.11 509.5,201.75 510.0,202.40 510.5,203.07 511.0,203.74 511.5,204.43 512.0,205.14 512.5,205.86 513.0,206.59 513.5,207.33 514.0,208.09 514.5,208.86 515.0,209.65 515.5,210.45 516.0,211.26 516.5,212.08 517.0,212.92 517.5,213.78 518.0,214.64 518.5,215.52 519.0,216.42 519.5,217.32 520.0,218.24 520.5,219.18 521.0,220.12 521.5,221.09 522.0,222.06 522.5,223.05 523.0,224.05 523.5,225.06 524.0,226.09 524.5,227.13 525.0,228.19 525.5,229.26 526.0,230.34 526.5,231.43 527.0,232.54 527.5,233.66 528.0,234.79 528.5,235.94 529.0,237.10 529.5,238.27 530.0,239.45 530.5,240.65 531.0,241.86 531.5,243.08 532.0,244.32 532.5,245.57 533.0,246.83 533.5,248.10 534.0,249.38 534.5,250.68 535.0,251.99 535.5,253.31 536.0,254.64 536.5,255.98 537.0,257.34 537.5,258.70 538.0,260.08 538.5,261.47 539.0,262.87 539.5,264.28 540.0,265.70 540.5,267.13 541.0,268.57 541.5,270.02 542.0,271.48 542.5,272.96 543.0,274.44 543.5,275.93 544.0,277.43 544.5,278.94 545.0,280.46 545.5,281.99 546.0,283.53 546.5,285.07 547.0,286.63 547.5,288.19 548.0,289.76 548.5,291.34 549.0,292.93 549.5,294.52 550.0,296.12 550.5,297.73 551.0,299.35 551.5,300.97 552.0,302.60 552.5,304.23 553.0,305.87 553.5,307.52 554.0,309.17 554.5,310.83 555.0,312.49 555.5,314.16 556.0,315.83 556.5,317.51 557.0,319.19 557.5,320.88 558.0,322.56 558.5,324.26 559.0,325.95 559.5,327.65 560.0,329.35 560.5,331.06 561.0,332.77 561.5,334.48 562.0,336.19 562.5,337.90 563.0,339.61 563.5,341.33 564.0,343.05 564.5,344.76 565.0,346.48 565.5,348.20 566.0,349.92 566.5,351.64 567.0,353.35 567.5,355.07 568.0,356.78 568.5,358.50 569.0,360.21 569.5,361.92 570.0,363.63 570.5,365.34 571.0,367.04 571.5,368.74 572.0,370.44 572.5,372.14 573.0,373.83 573.5,375.52 574.0,377.20 574.5,378.88 575.0,380.56 575.5,382.23 576.0,383.90 576.5,385.56 577.0,387.22 577.5,388.87 578.0,390.52 578.5,392.15 579.0,393.79 579.5,395.42 580.0,397.04 580.5,398.65 581.0,400.26 581.5,401.86 582.0,403.45 582.5,405.03 583.0,406.61 583.5,408.18 584.0,409.74 584.5,411.30 585.0,412.84 585.5,414.38 586.0,415.90 586.5,417.42 587.0,418.93 587.5,420.43 588.0,421.92 588.5,423.40 589.0,424.87 589.5,426.33 590.0,427.78 590.5,429.22 591.0,430.65 591.5,432.07 592.0,433.48 592.5,434.87 593.0,436.26 593.5,437.63 594.0,439.00 594.5,440.35 595.0,441.69 595.5,443.02 596.0,444.34 596.5,445.65 597.0,446.94 597.5,448.22 598.0,449.49 598.5,450.75 599.0,451.99 599.5,453.23 600.0,454.45 600.5,455.66 601.0,456.85 601.5,458.03 602.0,459.20 602.5,460.36 603.0,461.50 603.5,462.63 604.0,463.75 604.5,464.86 605.0,465.95 605.5,467.03 606.0,468.09 606.5,469.15 607.0,470.19 607.5,471.21 608.0,472.22 608.5,473.22 609.0,474.21 609.5,475.18 610.0,476.14 610.5,477.08 611.0,478.02 611.5,478.93 612.0,479.84 612.5,480.73 613.0,481.61 613.5,482.47 614.0,483.32 614.5,484.16 615.0,484.98 615.5,485.79 616.0,486.59 616.5,487.37 617.0,488.14 617.5,488.90 618.0,489.64 618.5,490.37 619.0,491.08 619.5,491.78 620.0,492.47 620.5,493.15 621.0,493.81 621.5,494.46 622.0,495.09 622.5,495.72 623.0,496.32 623.5,496.92 624.0,497.50 624.5,498.07 625.0,498.63 625.5,499.17 626.0,499.70 626.5,500.22 627.0,500.72 627.5,501.21 628.0,501.69 628.5,502.15 629.0,502.60 629.5,503.04 630.0,503.47 630.5,503.88 631.0,504.28 631.5,504.67 632.0,505.04 632.5,505.41 633.0,505.75 633.5,506.09 634.0,506.42 634.5,506.73 635.0,507.03 635.5,507.31 636.0,507.59 636.5,507.85 637.0,508.10 637.5,508.33 638.0,508.56 638.5,508.77 639.0,508.97 639.5,509.16 640.0,509.33 640.5,509.49 641.0,509.64 641.5,509.78 642.0,509.91 642.5,510.02 643.0,510.12 643.5,510.21 644.0,510.29 644.5,510.35 645.0,510.40 645.5,510.44 646.0,510.47 646.5,510.49 647.0,510.49 647.5,510.48 648.0,510.46 648.5,510.43 649.0,510.38 649.5,510.33 650.0,510.26 650.5,510.17 651.0,510.08 651.5,509.97 652.0,509.85 652.5,509.72 653.0,509.58 653.5,509.43 654.0,509.26 654.5,509.08 655.0,508.89 655.5,508.68 656.0,508.46 656.5,508.24 657.0,507.99 657.5,507.74 658.0,507.47 658.5,507.19 659.0,506.90 659.5,506.60 660.0,506.28 660.5,505.95 661.0,505.61 661.5,505.25 662.0,504.89 662.5,504.51 663.0,504.11 663.5,503.71 664.0,503.29 664.5,502.86 665.0,502.42 665.5,501.96 666.0,501.49 666.5,501.01 667.0,500.51 667.5,500.00 668.0,499.48 668.5,498.95 669.0,498.40 669.5,497.84 670.0,497.26 670.5,496.67 671.0,496.07 671.5,495.46 672.0,494.83 672.5,494.19 673.0,493.54 673.5,492.87 674.0,492.19 674.5,491.50 675.0,490.79 675.5,490.07 676.0,489.33 676.5,488.59 677.0,487.82 677.5,487.05 678.0,486.26 678.5,485.46 679.0,484.64 679.5,483.82 680.0,482.97 680.5,482.12 681.0,481.25 681.5,480.36 682.0,479.47 682.5,478.56 683.0,477.63 683.5,476.70 684.0,475.75 684.5,474.78 685.0,473.81 685.5,472.81 686.0,471.81 686.5,470.79 687.0,469.76 687.5,468.72 688.0,467.66 688.5,466.59 689.0,465.50 689.5,464.41 690.0,463.30 690.5,462.17 691.0,461.04 691.5,459.89 692.0,458.73 692.5,457.55 693.0,456.36 693.5,455.16 694.0,453.95 694.5,452.72 695.0,451.48 695.5,450.23 696.0,448.97 696.5,447.70 697.0,446.41 697.5,445.11 698.0,443.80 698.5,442.48 699.0,441.14 699.5,439.80 700.0,438.44 700.5,437.07 701.0,435.69 701.5,434.30 702.0,432.90 702.5,431.48 703.0,430.06 703.5,428.63 704.0,427.18 704.5,425.73 705.0,424.26 705.5,422.79 706.0,421.30 706.5,419.81 707.0,418.30 707.5,416.79 708.0,415.27 708.5,413.73 709.0,412.19 709.5,410.65 710.0,409.09 710.5,407.52 711.0,405.95 711.5,404.37 712.0,402.78 712.5,401.18 713.0,399.58 713.5,397.97 714.0,396.35 714.5,394.72 715.0,393.09 715.5,391.45 716.0,389.81 716.5,388.16 717.0,386.51 717.5,384.85 718.0,383.18 718.5,381.51 719.0,379.83 719.5,378.15 720.0,376.47 720.5,374.78 721.0,373.09 721.5,371.39 722.0,369.69 722.5,367.99 723.0,366.29 723.5,364.58 724.0,362.87 724.5,361.16 725.0,359.44 725.5,357.73 726.0,356.01 726.5,354.29 727.0,352.57 727.5,350.85 728.0,349.13 728.5,347.41 729.0,345.69 729.5,343.97 730.0,342.25 730.5,340.53 731.0,338.81 731.5,337.10 732.0,335.38 732.5,333.67 733.0,331.96 733.5,330.25 734.0,328.54 734.5,326.83 735.0,325.13 735.5,323.43 736.0,321.74 736.5,320.05 737.0,318.36 737.5,316.68 738.0,315.00 738.5,313.32 739.0,311.65 739.5,309.99 740.0,308.33 740.5,306.68 741.0,305.03 741.5,303.39 742.0,301.75 742.5,300.12 743.0,298.50 743.5,296.88 744.0,295.27 744.5,293.67 745.0,292.07 745.5,290.48 746.0,288.90 746.5,287.33 747.0,285.77 747.5,284.21 748.0,282.67 748.5,281.13 749.0,279.60 749.5,278.08 750.0,276.57 750.5,275.06 751.0,273.57 751.5,272.09 752.0,270.62 752.5,269.15 753.0,267.70 753.5,266.26 754.0,264.83 754.5,263.40 755.0,261.99 755.5,260.59 756.0,259.20 756.5,257.83 757.0,256.46 757.5,255.11 758.0,253.76 758.5,252.43 759.0,251.11 759.5,249.80 760.0,248.50 760.5,247.22 761.0,245.95 761.5,244.69 762.0,243.44 762.5,242.20 763.0,240.98 763.5,239.77 764.0,238.57 764.5,237.39 765.0,236.22 765.5,235.06 766.0,233.91 766.5,232.78 767.0,231.65 767.5,230.55 768.0,229.45 768.5,228.37 769.0,227.30 769.5,226.25 770.0,225.21 770.5,224.18 771.0,223.16 771.5,222.16 772.0,221.17 772.5,220.20 773.0,219.24 773.5,218.29 774.0,217.36 774.5,216.44 775.0,215.53 775.5,214.64 776.0,213.76 776.5,212.89 777.0,212.04 777.5,211.20 778.0,210.37 778.5,209.56 779.0,208.76 779.5,207.97 780.0,207.20 780.5,206.44 781.0,205.70 781.5,204.97 782.0,204.25 782.5,203.55 783.0,202.85 783.5,202.18 784.0,201.51 784.5,200.86 785.0,200.22 785.5,199.60 786.0,198.99 786.5,198.39 787.0,197.81 787.5,197.23 788.0,196.68 788.5,196.13 789.0,195.60 789.5,195.08 790.0,194.57 790.5,194.08 791.0,193.60 791.5,193.13 792.0,192.68 792.5,192.24 793.0,191.81 793.5,191.40 794.0,190.99 794.5,190.60 795.0,190.23 795.5,189.86 796.0,189.51 796.5,189.17 797.0,188.84 797.5,188.53 798.0,188.23 798.5,187.94 799.0,187.66 799.5,187.40 800.0,187.15 800.5,186.91 801.0,186.68 801.5,186.47 802.0,186.27 802.5,186.08 803.0,185.90 803.5,185.74 804.0,185.58 804.5,185.44 805.0,185.32 805.5,185.20 806.0,185.10 806.5,185.01 807.0,184.93 807.5,184.86 808.0,184.80 808.5,184.76 809.0,184.73 809.5,184.71 810.0,184.71 810.5,184.71 811.0,184.73 811.5,184.76 812.0,184.81 812.5,184.86 813.0,184.93 813.5,185.01 814.0,185.10 814.5,185.20 815.0,185.32 815.5,185.45 816.0,185.59 816.5,185.74 817.0,185.91 817.5,186.09 818.0,186.28 818.5,186.48 819.0,186.69 819.5,186.92 820.0,187.16 820.5,187.41 821.0,187.68 821.5,187.95 822.0,188.24 822.5,188.54 823.0,188.86 823.5,189.19 824.0,189.53 824.5,189.88 825.0,190.24 825.5,190.62 826.0,191.01 826.5,191.41 827.0,191.83 827.5,192.26 828.0,192.70 828.5,193.16 829.0,193.62 829.5,194.10 830.0,194.60 830.5,195.10 831.0,195.62 831.5,196.16 832.0,196.70 832.5,197.26 833.0,197.83 833.5,198.42 834.0,199.02 834.5,199.63 835.0,200.25 835.5,200.89 836.0,201.54 836.5,202.21 837.0,202.89 837.5,203.58 838.0,204.28 838.5,205.00 839.0,205.74 839.5,206.48 840.0,207.24 840.5,208.01 841.0,208.80 841.5,209.60 842.0,210.41 842.5,211.24 843.0,212.08 843.5,212.93 844.0,213.80 844.5,214.68 845.0,215.57 845.5,216.48 846.0,217.40 846.5,218.34 847.0,219.29 847.5,220.25 848.0,221.22 848.5,222.21 849.0,223.22 849.5,224.23 850.0,225.26 850.5,226.30 851.0,227.36 851.5,228.43 852.0,229.51 852.5,230.60 853.0,231.71 853.5,232.83 854.0,233.97 854.5,235.11 855.0,236.27 855.5,237.45 856.0,238.63 856.5,239.83 857.0,241.04 857.5,242.27 858.0,243.50 858.5,244.75 859.0,246.01 859.5,247.28 860.0,248.57 860.5,249.87 861.0,251.18 861.5,252.50 862.0,253.83 862.5,255.17 863.0,256.53 863.5,257.89 864.0,259.27 864.5,260.66 865.0,262.06 865.5,263.47 866.0,264.89 866.5,266.33 867.0,267.77 867.5,269.22 868.0,270.68 868.5,272.16 869.0,273.64 869.5,275.13 870.0,276.64 870.5,278.15 871.0,279.67 871.5,281.20 872.0,282.73 872.5,284.28 873.0,285.84 873.5,287.40 874.0,288.97 874.5,290.55 875.0,292.14 875.5,293.73 876.0,295.34 876.5,296.94 877.0,298.56 877.5,300.18 878.0,301.81 878.5,303.45 879.0,305.09 879.5,306.74 880.0,308.39 880.5,310.05 881.0,311.71 881.5,313.38 882.0,315.05 882.5,316.73 883.0,318.42 883.5,320.10 884.0,321.79 884.5,323.48 885.0,325.18 885.5,326.88 886.0,328.59 886.5,330.29 887.0,332.00 887.5,333.71 888.0,335.42 888.5,337.13 889.0,338.85 889.5,340.57 890.0,342.28 890.5,344.00 891.0,345.72 891.5,347.44 892.0,349.16 892.5,350.88 893.0,352.59 893.5,354.31 894.0,356.03 894.5,357.74 895.0,359.46 895.5,361.17 896.0,362.88 896.5,364.59 897.0,366.29 897.5,367.99 898.0,369.69 898.5,371.39 899.0,373.08 899.5,374.77 900.0,376.46 900.5,378.14 901.0,379.82 901.5,381.49 902.0,383.16 902.5,384.82 903.0,386.48 903.5,388.13 904.0,389.77 904.5,391.41 905.0,393.05 905.5,394.68 906.0,396.30 906.5,397.91 907.0,399.52 907.5,401.12 908.0,402.72 908.5,404.30 909.0,405.88 909.5,407.45 910.0,409.01 910.5,410.57 911.0,412.11 911.5,413.65 912.0,415.17 912.5,416.69 913.0,418.20 913.5,419.70 914.0,421.19 914.5,422.67 915.0,424.15 915.5,425.61 916.0,427.06 916.5,428.50 917.0,429.93 917.5,431.35 918.0,432.76 918.5,434.15 919.0,435.54 919.5,436.92 920.0,438.28 920.5,439.64 921.0,440.98 921.5,442.31 922.0,443.63 922.5,444.93 923.0,446.23 923.5,447.51 924.0,448.78 924.5,450.04 925.0,451.28 925.5,452.52 926.0,453.74 926.5,454.95 927.0,456.14 927.5,457.33 928.0,458.50 928.5,459.66 929.0,460.80 929.5,461.93 930.0,463.05 930.5,464.16 931.0,465.25 931.5,466.33 932.0,467.40 932.5,468.45 933.0,469.49 933.5,470.51 934.0,471.53 934.5,472.53 935.0,473.51 935.5,474.49 936.0,475.45 936.5,476.39 937.0,477.32 937.5,478.24 938.0,479.15 938.5,480.04 939.0,480.92 939.5,481.78 940.0,482.63 940.5,483.47 941.0,484.30 941.5,485.11 942.0,485.90 942.5,486.69 943.0,487.46 943.5,488.21 944.0,488.96 944.5,489.69 945.0,490.40 945.5,491.11 946.0,491.79 946.5,492.47 947.0,493.13 947.5,493.78 948.0,494.42 948.5,495.04 949.0,495.65 949.5,496.25 950.0,496.83 950.5,497.40 951.0,497.96 951.5,498.50 952.0,499.03 952.5,499.55 953.0,500.05 953.5,500.54 954.0,501.02 954.5,501.48 955.0,501.94 955.5,502.38 956.0,502.80 956.5,503.22 957.0,503.62 957.5,504.01 958.0,504.38 958.5,504.74 959.0,505.09 959.5,505.43 960.0,505.76 960.5,506.07 961.0,506.37 961.5,506.66 962.0,506.93 962.5,507.19 963.0,507.44 963.5,507.68 964.0,507.90 964.5,508.12 965.0,508.32 965.5,508.50 966.0,508.68 966.5,508.84 967.0,508.99 967.5,509.13 968.0,509.26 968.5,509.37 969.0,509.47 969.5,509.56 970.0,509.64 970.5,509.71 971.0,509.76 971.5,509.80 972.0,509.83 972.5,509.84 973.0,509.85 973.5,509.84 974.0,509.82 974.5,509.79 975.0,509.74 975.5,509.69 976.0,509.62 976.5,509.54 977.0,509.44 977.5,509.34 978.0,509.22 978.5,509.09 979.0,508.95 979.5,508.79 980.0,508.63 980.5,508.45 981.0,508.25 981.5,508.05 982.0,507.83 982.5,507.61 983.0,507.36 983.5,507.11 984.0,506.84 984.5,506.57 985.0,506.28 985.5,505.97 986.0,505.66 986.5,505.33 987.0,504.99 987.5,504.63 988.0,504.27 988.5,503.89 989.0,503.49 989.5,503.09 990.0,502.67 990.5,502.24 991.0,501.80 991.5,501.34 992.0,500.87 992.5,500.39 993.0,499.89 993.5,499.39 994.0,498.87 994.5,498.33 995.0,497.78 995.5,497.22 996.0,496.65 996.5,496.06 997.0,495.46 997.5,494.85 998.0,494.22 998.5,493.58 999.0,492.93 999.5,492.26 1000.0,491.58 1000.5,490.89 1001.0,490.18 1001.5,489.46 1002.0,488.73 1002.5,487.98 1003.0,487.22 1003.5,486.45 1004.0,485.66 1004.5,484.86 1005.0,484.04 1005.5,483.21 1006.0,482.37 1006.5,481.52 1007.0,480.65 1007.5,479.77 1008.0,478.87 1008.5,477.96 1009.0,477.04 1009.5,476.10 1010.0,475.15 1010.5,474.19 1011.0,473.21 1011.5,472.22 1012.0,471.22 1012.5,470.20 1013.0,469.17 1013.5,468.13 1014.0,467.07 1014.5,466.00 1015.0,464.92 1015.5,463.82 1016.0,462.71 1016.5,461.59 1017.0,460.45 1017.5,459.30 1018.0,458.14 1018.5,456.97 1019.0,455.78 1019.5,454.58 1020.0,453.37 1020.5,452.14 1021.0,450.90 1021.5,449.65 1022.0,448.39 1022.5,447.12 1023.0,445.83 1023.5,444.53 1024.0,443.22 1024.5,441.90 1025.0,440.56 1025.5,439.22 1026.0,437.86 1026.5,436.49 1027.0,435.11 1027.5,433.72 1028.0,432.32 1028.5,430.91 1029.0,429.49 1029.5,428.05 1030.0,426.61 1030.5,425.15 1031.0,423.69 1031.5,422.22 1032.0,420.73 1032.5,419.24 1033.0,417.73 1033.5,416.22 1034.0,414.70 1034.5,413.17 1035.0,411.63 1035.5,410.08 1036.0,408.52 1036.5,406.96 1037.0,405.39 1037.5,403.80 1038.0,402.22 1038.5,400.62 1039.0,399.02 1039.5,397.41 1040.0,395.79 1040.5,394.16 1041.0,392.53 1041.5,390.90 1042.0,389.25 1042.5,387.60 1043.0,385.95 1043.5,384.29 1044.0,382.62 1044.5,380.95 1045.0,379.28 1045.5,377.60 1046.0,375.92 1046.5,374.23 1047.0,372.54 1047.5,370.84 1048.0,369.14 1048.5,367.44 1049.0,365.74 1049.5,364.03 1050.0,362.32 1050.5,360.61 1051.0,358.90 1051.5,357.18 1052.0,355.46 1052.5,353.75 1053.0,352.03 1053.5,350.31 1054.0,348.59 1054.5,346.87 1055.0,345.15 1055.5,343.43 1056.0,341.71 1056.5,339.99 1057.0,338.27 1057.5,336.56 1058.0,334.84 1058.5,333.13 1059.0,331.42 1059.5,329.71 1060.0,328.00 1060.5,326.30 1061.0,324.60 1061.5,322.90 1062.0,321.20 1062.5,319.51 1063.0,317.83 1063.5,316.14 1064.0,314.47 1064.5,312.79 1065.0,311.12 1065.5,309.46 1066.0,307.80 1066.5,306.15 1067.0,304.50 1067.5,302.86 1068.0,301.22 1068.5,299.59 1069.0,297.97 1069.5,296.35 1070.0,294.74 1070.5,293.14 1071.0,291.55 1071.5,289.96 1072.0,288.38 1072.5,286.81 1073.0,285.24 1073.5,283.69 1074.0,282.14 1074.5,280.61 1075.0,279.08 1075.5,277.56 1076.0,276.05 1076.5,274.54 1077.0,273.05 1077.5,271.57 1078.0,270.10 1078.5,268.63 1079.0,267.18 1079.5,265.74 1080.0,264.31 1080.5,262.89 1081.0,261.48 1081.5,260.08 1082.0,258.69 1082.5,257.31 1083.0,255.95 1083.5,254.59 1084.0,253.25 1084.5,251.92 1085.0,250.60 1085.5,249.29 1086.0,247.99 1086.5,246.71 1087.0,245.44 1087.5,244.18 1088.0,242.93 1088.5,241.70 1089.0,240.47 1089.5,239.26 1090.0,238.07 1090.5,236.88 1091.0,235.71 1091.5,234.55 1092.0,233.40 1092.5,232.27 1093.0,231.15 1093.5,230.04 1094.0,228.95 1094.5,227.87 1095.0,226.80 1095.5,225.75 1096.0,224.71 1096.5,223.68 1097.0,222.67 1097.5,221.66 1098.0,220.68 1098.5,219.70 1099.0,218.74 1099.5,217.79 1100.0,216.86 1100.5,215.94 1101.0,215.03 1101.5,214.14 1102.0,213.26 1102.5,212.40 1103.0,211.54 1103.5,210.70 1104.0,209.88 1104.5,209.07 1105.0,208.27 1105.5,207.48 1106.0,206.71 1106.5,205.95 1107.0,205.21 1107.5,204.48 1108.0,203.76 1108.5,203.06 1109.0,202.37 1109.5,201.69 1110.0,201.03 1110.5,200.38 1111.0,199.74 1111.5,199.12 1112.0,198.50 1112.5,197.91 1113.0,197.32 1113.5,196.75 1114.0,196.19 1114.5,195.65 1115.0,195.12 1115.5,194.60 1116.0,194.09 1116.5,193.60 1117.0,193.12 1117.5,192.66 1118.0,192.20 1118.5,191.76 1119.0,191.33 1119.5,190.92 1120.0,190.52 1120.5,190.13 1121.0,189.75 1121.5,189.39 1122.0,189.04 1122.5,188.70 1123.0,188.37 1123.5,188.06 1124.0,187.76 1124.5,187.47 1125.0,187.19 1125.5,186.93 1126.0,186.68 1126.5,186.44 1127.0,186.21 1127.5,186.00 1128.0,185.80 1128.5,185.61 1129.0,185.43 1129.5,185.27 1130.0,185.12 1130.5,184.98 1131.0,184.85 1131.5,184.73 1132.0,184.63 1132.5,184.54 1133.0,184.46 1133.5,184.40 1134.0,184.34 1134.5,184.30 1135.0,184.27 1135.5,184.25 1136.0,184.25 1136.5,184.25 1137.0,184.27 1137.5,184.30 1138.0,184.35 1138.5,184.40 1139.0,184.47 1139.5,184.55 1140.0,184.64 1140.5,184.75 1141.0,184.86 1141.5,184.99 1142.0,185.13 1142.5,185.29 1143.0,185.45 1143.5,185.63 1144.0,185.82 1144.5,186.02 1145.0,186.24 1145.5,186.47 1146.0,186.71 1146.5,186.96 1147.0,187.22 1147.5,187.50 1148.0,187.79 1148.5,188.09 1149.0,188.41 1149.5,188.74 1150.0,189.08 1150.5,189.43 1151.0,189.80 1151.5,190.17 1152.0,190.56 1152.5,190.97 1153.0,191.38 1153.5,191.81 1154.0,192.26 1154.5,192.71 1155.0,193.18 1155.5,193.66 1156.0,194.15 1156.5,194.66 1157.0,195.18 1157.5,195.71 1158.0,196.26 1158.5,196.82 1159.0,197.39 1159.5,197.98 1160.0,198.58 1160.5,199.19 1161.0,199.81 1161.5,200.45 1162.0,201.11 1162.5,201.77 1163.0,202.45 1163.5,203.14 1164.0,203.85 1164.5,204.57 1165.0,205.30 1165.5,206.05 1166.0,206.81 1166.5,207.58 1167.0,208.37 1167.5,209.17 1168.0,209.98 1168.5,210.81 1169.0,211.65 1169.5,212.50 1170.0,213.37 1170.5,214.25 1171.0,215.14 1171.5,216.05 1172.0,216.97 1172.5,217.91 1173.0,218.86 1173.5,219.82 1174.0,220.80 1174.5,221.79 1175.0,222.79 1175.5,223.80 1176.0,224.83 1176.5,225.88 1177.0,226.93 1177.5,228.00 1178.0,229.08 1178.5,230.18 1179.0,231.29 1179.5,232.41 1180.0,233.54 1180.5,234.69 1181.0,235.85 1181.5,237.03 1182.0,238.21 1182.5,239.41 1183.0,240.62 1183.5,241.85 1184.0,243.08 1184.5,244.33 1185.0,245.59 1185.5,246.87 1186.0,248.15 1186.5,249.45 1187.0,250.76 1187.5,252.08 1188.0,253.41 1188.5,254.76 1189.0,256.11 1189.5,257.48 1190.0,258.86 1190.5,260.25 1191.0,261.65 1191.5,263.06 1192.0,264.48 1192.5,265.91 1193.0,267.36 1193.5,268.81 1194.0,270.27 1194.5,271.75 1195.0,273.23 1195.5,274.72 1196.0,276.23 1196.5,277.74 1197.0,279.26 1197.5,280.79 1198.0,282.33 1198.5,283.87 1199.0,285.43 1199.5,286.99 1200.0,288.57 1200.5,290.15 1201.0,291.73 1201.5,293.33 1202.0,294.93 1202.5,296.54 1203.0,298.16 1203.5,299.78 1204.0,301.41 1204.5,303.05 1205.0,304.69 1205.5,306.34 1206.0,307.99 1206.5,309.65 1207.0,311.31 1207.5,312.98 1208.0,314.66 1208.5,316.33 1209.0,318.02 1209.5,319.70 1210.0,321.39 1210.5,323.09 1211.0,324.79 1211.5,326.49 1212.0,328.19 1212.5,329.90 1213.0,331.60 1213.5,333.31 1214.0,335.03 1214.5,336.74 1215.0,338.46 1215.5,340.17 1216.0,341.89 1216.5,343.61 1217.0,345.33 1217.5,347.05 1218.0,348.77 1218.5,350.49 1219.0,352.20 1219.5,353.92 1220.0,355.64 1220.5,357.35 1221.0,359.07 1221.5,360.78 1222.0,362.49 1222.5,364.20 1223.0,365.90 1223.5,367.61 1224.0,369.31 1224.5,371.00 1225.0,372.70 1225.5,374.39 1226.0,376.07 1226.5,377.75 1227.0,379.43 1227.5,381.10 1228.0,382.77 1228.5,384.44 1229.0,386.09 1229.5,387.75 1230.0,389.39 1230.5,391.03 1231.0,392.67 1231.5,394.30 1232.0,395.92 1232.5,397.53 1233.0,399.14 1233.5,400.74 1234.0,402.34 1234.5,403.92 1235.0,405.50 1235.5,407.07 1236.0,408.63 1236.5,410.19 1237.0,411.73 1237.5,413.27 1238.0,414.80 1238.5,416.32 1239.0,417.83 1239.5,419.33 1240.0,420.82 1240.5,422.30 1241.0,423.77 1241.5,425.23 1242.0,426.68 1242.5,428.13 1243.0,429.56 1243.5,430.98 1244.0,432.39 1244.5,433.78 1245.0,435.17 1245.5,436.55 1246.0,437.91 1246.5,439.27 1247.0,440.61 1247.5,441.94 1248.0,443.26 1248.5,444.56 1249.0,445.86 1249.5,447.14 1250.0,448.41 1250.5,449.67 1251.0,450.92 1251.5,452.15 1252.0,453.37 1252.5,454.58 1253.0,455.78 1253.5,456.96 1254.0,458.13 1254.5,459.29 1255.0,460.44 1255.5,461.57 1256.0,462.69 1256.5,463.79 1257.0,464.89 1257.5,465.97 1258.0,467.03 1258.5,468.09 1259.0,469.13 1259.5,470.15 1260.0,471.17 1260.5,472.17 1261.0,473.15 1261.5,474.13 1262.0,475.09 1262.5,476.03 1263.0,476.97 1263.5,477.89 1264.0,478.79 1264.5,479.68 1265.0,480.56 1265.5,481.43 1266.0,482.28 1266.5,483.12 1267.0,483.94 1267.5,484.75 1268.0,485.55 1268.5,486.33 1269.0,487.10 1269.5,487.86 1270.0,488.60 1270.5,489.33 1271.0,490.05 1271.5,490.75 1272.0,491.44 1272.5,492.12 1273.0,492.78 1273.5,493.43 1274.0,494.07 1274.5,494.69 1275.0,495.30 1275.5,495.90 1276.0,496.48 1276.5,497.05 1277.0,497.61 1277.5,498.15 1278.0,498.68 1278.5,499.20 1279.0,499.70 1279.5,500.20 1280.0,500.67 1280.5,501.14 1281.0,501.59 1281.5,502.03 1282.0,502.46 1282.5,502.87 1283.0,503.27 1283.5,503.66 1284.0,504.04 1284.5,504.40 1285.0,504.75 1285.5,505.09 1286.0,505.41 1286.5,505.73 1287.0,506.03 1287.5,506.31 1288.0,506.59 1288.5,506.85 1289.0,507.10 1289.5,507.34 1290.0,507.56 1290.5,507.78 1291.0,507.98 1291.5,508.17 1292.0,508.34 1292.5,508.51 1293.0,508.66 1293.5,508.80 1294.0,508.92 1294.5,509.04 1295.0,509.14 1295.5,509.23 1296.0,509.31 1296.5,509.37 1297.0,509.42 1297.5,509.47 1298.0,509.49 1298.5,509.51 1299.0,509.52 1299.5,509.51 1300.0,509.49 1300.5,509.46 1301.0,509.41 1301.5,509.36 1302.0,509.29 1302.5,509.21 1303.0,509.11 1303.5,509.01 1304.0,508.89 1304.5,508.76 1305.0,508.62 1305.5,508.46 1306.0,508.30 1306.5,508.12 1307.0,507.93 1307.5,507.72 1308.0,507.51 1308.5,507.28 1309.0,507.04 1309.5,506.79 1310.0,506.52 1310.5,506.24 1311.0,505.95 1311.5,505.65 1312.0,505.33 1312.5,505.00 1313.0,504.66 1313.5,504.31 1314.0,503.94 1314.5,503.56 1315.0,503.17 1315.5,502.77 1316.0,502.35 1316.5,501.92 1317.0,501.48 1317.5,501.02 1318.0,500.55 1318.5,500.07 1319.0,499.57 1319.5,499.07 1320.0,498.55 1320.5,498.01 1321.0,497.47 1321.5,496.90 1322.0,496.33 1322.5,495.75 1323.0,495.15 1323.5,494.53 1324.0,493.91 1324.5,493.27 1325.0,492.61 1325.5,491.95 1326.0,491.27 1326.5,490.57 1327.0,489.87 1327.5,489.15 1328.0,488.41 1328.5,487.67 1329.0,486.91 1329.5,486.13 1330.0,485.35 1330.5,484.55 1331.0,483.73 1331.5,482.90 1332.0,482.06 1332.5,481.21 1333.0,480.34 1333.5,479.46 1334.0,478.56 1334.5,477.65 1335.0,476.73 1335.5,475.79 1336.0,474.84 1336.5,473.88 1337.0,472.90 1337.5,471.91 1338.0,470.91 1338.5,469.89 1339.0,468.86 1339.5,467.82 1340.0,466.76 1340.5,465.69 1341.0,464.61 1341.5,463.51 1342.0,462.40 1342.5,461.28 1343.0,460.15 1343.5,459.00 1344.0,457.84 1344.5,456.66 1345.0,455.47 1345.5,454.27 1346.0,453.06 1346.5,451.84 1347.0,450.60 1347.5,449.35 1348.0,448.09 1348.5,446.82 1349.0,445.53 1349.5,444.23 1350.0,442.92 1350.5,441.60 1351.0,440.27 1351.5,438.92 1352.0,437.56 1352.5,436.20 1353.0,434.82 1353.5,433.43 1354.0,432.02 1354.5,430.61 1355.0,429.19 1355.5,427.76 1356.0,426.31 1356.5,424.86 1357.0,423.39 1357.5,421.92 1358.0,420.44 1358.5,418.94 1359.0,417.44 1359.5,415.93 1360.0,414.41 1360.5,412.87 1361.0,411.34 1361.5,409.79 1362.0,408.23 1362.5,406.67 1363.0,405.09 1363.5,403.51 1364.0,401.92 1364.5,400.33 1365.0,398.72 1365.5,397.11 1366.0,395.50 1366.5,393.87 1367.0,392.24 1367.5,390.61 1368.0,388.96 1368.5,387.31 1369.0,385.66 1369.5,384.00 1370.0,382.34 1370.5,380.67 1371.0,378.99 1371.5,377.31 1372.0,375.63 1372.5,373.94 1373.0,372.25 1373.5,370.56 1374.0,368.86 1374.5,367.16 1375.0,365.45 1375.5,363.75 1376.0,362.04 1376.5,360.32 1377.0,358.61 1377.5,356.90 1378.0,355.18 1378.5,353.46 1379.0,351.74 1379.5,350.02 1380.0,348.31 1380.5,346.59 1381.0,344.87 1381.5,343.15 1382.0,341.43 1382.5,339.71 1383.0,337.99 1383.5,336.27 1384.0,334.56 1384.5,332.85 1385.0,331.14 1385.5,329.43 1386.0,327.72 1386.5,326.02 1387.0,324.32 1387.5,322.62 1388.0,320.93 1388.5,319.24 1389.0,317.55 1389.5,315.87 1390.0,314.19 1390.5,312.51 1391.0,310.85 1391.5,309.18 1392.0,307.52 1392.5,305.87 1393.0,304.22 1393.5,302.58 1394.0,300.95 1394.5,299.32 1395.0,297.69 1395.5,296.08 1396.0,294.47 1396.5,292.87 1397.0,291.27 1397.5,289.69 1398.0,288.11 1398.5,286.54 1399.0,284.97 1399.5,283.42 1400.0,281.87 1400.5,280.33 1401.0,278.81 1401.5,277.29 1402.0,275.77 1402.5,274.27 1403.0,272.78 1403.5,271.30 1404.0,269.83 1404.5,268.37 1405.0,266.91 1405.5,265.47 1406.0,264.04 1406.5,262.62 1407.0,261.21 1407.5,259.81 1408.0,258.42 1408.5,257.05 1409.0,255.68 1409.5,254.33 1410.0,252.98 1410.5,251.65 1411.0,250.33 1411.5,249.02 1412.0,247.73 1412.5,246.45 1413.0,245.17 1413.5,243.91 1414.0,242.67 1414.5,241.43 1415.0,240.21 1415.5,239.00 1416.0,237.80 1416.5,236.62 1417.0,235.45 1417.5,234.29 1418.0,233.14 1418.5,232.01 1419.0,230.89 1419.5,229.78 1420.0,228.69 1420.5,227.61 1421.0,226.54 1421.5,225.49 1422.0,224.45 1422.5,223.42 1423.0,222.41 1423.5,221.40 1424.0,220.42 1424.5,219.44 1425.0,218.48 1425.5,217.54 1426.0,216.60 1426.5,215.68 1427.0,214.78 1427.5,213.88 1428.0,213.00 1428.5,212.14 1429.0,211.29 1429.5,210.45 1430.0,209.62 1430.5,208.81 1431.0,208.01 1431.5,207.23 1432.0,206.46 1432.5,205.70 1433.0,204.96 1433.5,204.23 1434.0,203.51 1434.5,202.80 1435.0,202.11 1435.5,201.44 1436.0,200.77 1436.5,200.12 1437.0,199.49 1437.5,198.86 1438.0,198.25 1438.5,197.66 1439.0,197.07 1439.5,196.50 1440.0,195.94 1440.5,195.40 1441.0,194.87 1441.5,194.35 1442.0,193.84 1442.5,193.35 1443.0,192.87 1443.5,192.41 1444.0,191.95 1444.5,191.51 1445.0,191.09 1445.5,190.67 1446.0,190.27 1446.5,189.88 1447.0,189.50 1447.5,189.14 1448.0,188.79 1448.5,188.45 1449.0,188.12 1449.5,187.81 1450.0,187.51 1450.5,187.22 1451.0,186.95 1451.5,186.68 1452.0,186.43 1452.5,186.20 1453.0,185.97 1453.5,185.76 1454.0,185.55 1454.5,185.37 1455.0,185.19 1455.5,185.03 1456.0,184.87 1456.5,184.73 1457.0,184.61 1457.5,184.49 1458.0,184.39 1458.5,184.30 1459.0,184.22 1459.5,184.15 1460.0,184.10 1460.5,184.06 1461.0,184.03 1461.5,184.01 1462.0,184.01 1462.5,184.01 1463.0,184.03 1463.5,184.06 1464.0,184.11 1464.5,184.16 1465.0,184.23 1465.5,184.31 1466.0,184.40 1466.5,184.51 1467.0,184.63 1467.5,184.76 1468.0,184.90 1468.5,185.05 1469.0,185.22 1469.5,185.39 1470.0,185.59 1470.5,185.79 1471.0,186.00 1471.5,186.23 1472.0,186.47 1472.5,186.72 1473.0,186.99 1473.5,187.27 1474.0,187.56 1474.5,187.86 1475.0,188.18 1475.5,188.50 1476.0,188.84 1476.5,189.20 1477.0,189.56 1477.5,189.94 1478.0,190.33 1478.5,190.74 1479.0,191.15 1479.5,191.58 1480.0,192.02 1480.5,192.48 1481.0,192.95 1481.5,193.43 1482.0,193.92 1482.5,194.43 1483.0,194.95 1483.5,195.48 1484.0,196.03 1484.5,196.59 1485.0,197.16 1485.5,197.75 1486.0,198.35 1486.5,198.96 1487.0,199.59 1487.5,200.23 1488.0,200.88 1488.5,201.54 1489.0,202.22 1489.5,202.92 1490.0,203.62 1490.5,204.34 1491.0,205.07 1491.5,205.82 1492.0,206.58 1492.5,207.35 1493.0,208.14 1493.5,208.94 1494.0,209.75 1494.5,210.58 1495.0,211.42 1495.5,212.28 1496.0,213.14 1496.5,214.03 1497.0,214.92 1497.5,215.83 1498.0,216.75 1498.5,217.69 1499.0,218.64 1499.5,219.60 1500.0,220.57 1500.5,221.56 1501.0,222.57 1501.5,223.58 1502.0,224.61 1502.5,225.66 1503.0,226.71 1503.5,227.78 1504.0,228.86 1504.5,229.96 1505.0,231.07 1505.5,232.19 1506.0,233.32 1506.5,234.47 1507.0,235.63 1507.5,236.81 1508.0,237.99 1508.5,239.19 1509.0,240.40 1509.5,241.63 1510.0,242.87 1510.5,244.11 1511.0,245.38 1511.5,246.65 1512.0,247.93 1512.5,249.23 1513.0,250.54 1513.5,251.86 1514.0,253.20 1514.5,254.54 1515.0,255.90 1515.5,257.26 1516.0,258.64 1516.5,260.03 1517.0,261.43 1517.5,262.84 1518.0,264.27 1518.5,265.70 1519.0,267.14 1519.5,268.60 1520.0,270.06 1520.5,271.53 1521.0,273.02 1521.5,274.51 1522.0,276.01 1522.5,277.53 1523.0,279.05 1523.5,280.58 1524.0,282.12 1524.5,283.66 1525.0,285.22 1525.5,286.78 1526.0,288.36 1526.5,289.94 1527.0,291.52 1527.5,293.12 1528.0,294.72 1528.5,296.33 1529.0,297.95 1529.5,299.57 1530.0,301.20 1530.5,302.84 1531.0,304.48 1531.5,306.13 1532.0,307.78 1532.5,309.44 1533.0,311.10 1533.5,312.77 1534.0,314.45 1534.5,316.13 1535.0,317.81 1535.5,319.50 1536.0,321.19 1536.5,322.88 1537.0,324.58 1537.5,326.28 1538.0,327.98 1538.5,329.69 1539.0,331.40 1539.5,333.11 1540.0,334.82 1540.5,336.54 1541.0,338.25 1541.5,339.97 1542.0,341.69 1542.5,343.41 1543.0,345.12 1543.5,346.84 1544.0,348.56 1544.5,350.28 1545.0,352.00 1545.5,353.72 1546.0,355.44 1546.5,357.15 1547.0,358.87 1547.5,360.58 1548.0,362.29 1548.5,364.00 1549.0,365.70 1549.5,367.40 1550.0,369.11 1550.5,370.80 1551.0,372.50 1551.5,374.19 1552.0,375.87 1552.5,377.55 1553.0,379.23 1553.5,380.90 1554.0,382.57 1554.5,384.24 1555.0,385.89 1555.5,387.55 1556.0,389.19 1556.5,390.83 1557.0,392.47 1557.5,394.10 1558.0,395.72 1558.5,397.34 1559.0,398.94 1559.5,400.54 1560.0,402.14 1560.5,403.73 1561.0,405.30 1561.5,406.87 1562.0,408.44 1562.5,409.99 1563.0,411.54 1563.5,413.07 1564.0,414.60 1564.5,416.12 1565.0,417.63 1565.5,419.13 1566.0,420.62 1566.5,422.11 1567.0,423.58 1567.5,425.04 1568.0,426.49 1568.5,427.93 1569.0,429.36 1569.5,430.78 1570.0,432.19 1570.5,433.59 1571.0,434.98 1571.5,436.35 1572.0,437.72 1572.5,439.07 1573.0,440.42 1573.5,441.75 1574.0,443.07 1574.5,444.37 1575.0,445.67 1575.5,446.95 1576.0,448.22 1576.5,449.48 1577.0,450.73 1577.5,451.96 1578.0,453.18 1578.5,454.39 1579.0,455.59 1579.5,456.77 1580.0,457.94 1580.5,459.10 1581.0,460.25 1581.5,461.38 1582.0,462.50 1582.5,463.61 1583.0,464.70 1583.5,465.78 1584.0,466.85 1584.5,467.90 1585.0,468.94 1585.5,469.97 1586.0,470.98 1586.5,471.98 1587.0,472.97 1587.5,473.94 1588.0,474.90 1588.5,475.85 1589.0,476.78 1589.5,477.70 1590.0,478.61 1590.5,479.50 1591.0,480.38 1591.5,481.24 1592.0,482.09 1592.5,482.93 1593.0,483.76 1593.5,484.57 1594.0,485.36 1594.5,486.15 1595.0,486.92 1595.5,487.68 1596.0,488.42 1596.5,489.15 1597.0,489.87 1597.5,490.57 1598.0,491.26 1598.5,491.94 1599.0,492.60 1599.5,493.25 1600.0,493.89 1600.5,494.51 1601.0,495.12 1601.5,495.72 1602.0,496.30 1602.5,496.87 1603.0,497.43 1603.5,497.97 1604.0,498.50 1604.5,499.02 1605.0,499.52 1605.5,500.02 1606.0,500.49 1606.5,500.96 1607.0,501.41 1607.5,501.85 1608.0,502.28 1608.5,502.69 1609.0,503.09 1609.5,503.48 1610.0,503.86 1610.5,504.22 1611.0,504.57 1611.5,504.91 1612.0,505.24 1612.5,505.55 1613.0,505.85 1613.5,506.14 1614.0,506.41 1614.5,506.67 1615.0,506.93 1615.5,507.16 1616.0,507.39 1616.5,507.60 1617.0,507.80 1617.5,507.99 1618.0,508.17 1618.5,508.33 1619.0,508.48 1619.5,508.62 1620.0,508.75 1620.5,508.86 1621.0,508.96 1621.5,509.05 1622.0,509.13 1622.5,509.20 1623.0,509.25 1623.5,509.29 1624.0,509.32 1624.5,509.34 1625.0,509.34 1625.5,509.34 1626.0,509.32 1626.5,509.28 1627.0,509.24 1627.5,509.18 1628.0,509.11 1628.5,509.03 1629.0,508.94 1629.5,508.84 1630.0,508.72 1630.5,508.59 1631.0,508.45 1631.5,508.29 1632.0,508.13 1632.5,507.95 1633.0,507.76 1633.5,507.55 1634.0,507.34 1634.5,507.11 1635.0,506.87 1635.5,506.62 1636.0,506.35 1636.5,506.07 1637.0,505.78 1637.5,505.48 1638.0,505.16 1638.5,504.83 1639.0,504.49 1639.5,504.14 1640.0,503.77 1640.5,503.40 1641.0,503.00 1641.5,502.60 1642.0,502.18 1642.5,501.75 1643.0,501.31 1643.5,500.85 1644.0,500.38 1644.5,499.90 1645.0,499.41 1645.5,498.90 1646.0,498.38 1646.5,497.85 1647.0,497.30 1647.5,496.74 1648.0,496.17 1648.5,495.58 1649.0,494.98 1649.5,494.37 1650.0,493.74 1650.5,493.10 1651.0,492.45 1651.5,491.78 1652.0,491.10 1652.5,490.41" stroke="#1414D8" stroke-width="1.4" fill="none" clip-path="url(#c1)"/>
<rect x="1" y="567" width="1677" height="462" fill="#7A84D4" />
<rect x="2" y="567" width="1675" height="31" fill="url(#gInact)" />
<rect x="7" y="597" width="1666" height="426" fill="#808080" />
<rect x="8" y="598" width="1664" height="425" fill="#C0C0C0" />
<rect x="8" y="1023" width="1666" height="2" fill="#FFFFFF" />
<rect x="1672" y="598" width="2" height="427" fill="#FFFFFF" />
<text x="484" y="695" font-size="9.5" font-weight="400" fill="#000" text-anchor="start" letter-spacing="0.7" stroke="#000" stroke-width="0.2">V3</text>
<text x="662" y="626.8" font-size="9.5" font-weight="400" fill="#000" text-anchor="middle" letter-spacing="0.7" stroke="#000" stroke-width="0.2">D2</text>
<text x="662" y="653" font-size="9.5" font-weight="400" fill="#000" text-anchor="middle" letter-spacing="0.7" stroke="#000" stroke-width="0.2">1N4148</text>
<text x="662" y="681.7" font-size="9.5" font-weight="400" fill="#000" text-anchor="middle" letter-spacing="0.7" stroke="#000" stroke-width="0.2">D4</text>
<text x="662" y="707.6" font-size="9.5" font-weight="400" fill="#000" text-anchor="middle" letter-spacing="0.7" stroke="#000" stroke-width="0.2">1N4148</text>
<text x="924" y="654" font-size="9.5" font-weight="400" fill="#000" text-anchor="middle" letter-spacing="0.7" stroke="#000" stroke-width="0.2">L4</text>
<text x="924" y="677.5" font-size="9.5" font-weight="400" fill="#000" text-anchor="middle" letter-spacing="0.7" stroke="#000" stroke-width="0.2">150m</text>
<text x="1003.5" y="654" font-size="9.5" font-weight="400" fill="#000" text-anchor="middle" letter-spacing="0.7" stroke="#000" stroke-width="0.2">C7</text>
<text x="1004" y="680.5" font-size="9.5" font-weight="400" fill="#000" text-anchor="middle" letter-spacing="0.7" stroke="#000" stroke-width="0.2">100n</text>
<text x="881" y="692" font-size="9.5" font-weight="400" fill="#000" text-anchor="end" letter-spacing="0.7" stroke="#000" stroke-width="0.2">C2</text>
<text x="881" y="713" font-size="9.5" font-weight="400" fill="#000" text-anchor="end" letter-spacing="0.7" stroke="#000" stroke-width="0.2">50n</text>
<text x="965" y="692" font-size="9.5" font-weight="400" fill="#000" text-anchor="end" letter-spacing="0.7" stroke="#000" stroke-width="0.2">C6</text>
<text x="965" y="713" font-size="9.5" font-weight="400" fill="#000" text-anchor="end" letter-spacing="0.7" stroke="#000" stroke-width="0.2">50n</text>
<text x="1050" y="711" font-size="9.5" font-weight="400" fill="#000" text-anchor="end" letter-spacing="0.7" stroke="#000" stroke-width="0.2">R4</text>
<text x="1050" y="727" font-size="9.5" font-weight="400" fill="#000" text-anchor="end" letter-spacing="0.7" stroke="#000" stroke-width="0.2">10k</text>
<text x="1038" y="661.5" font-size="9.5" font-weight="400" fill="#000" text-anchor="start" letter-spacing="0.7" stroke="#000" stroke-width="0.2">OUT_1</text>
<text x="484" y="876" font-size="9.5" font-weight="400" fill="#000" text-anchor="start" letter-spacing="0.7" stroke="#000" stroke-width="0.2">V2</text>
<text x="662" y="807.8" font-size="9.5" font-weight="400" fill="#000" text-anchor="middle" letter-spacing="0.7" stroke="#000" stroke-width="0.2">D1</text>
<text x="662" y="834" font-size="9.5" font-weight="400" fill="#000" text-anchor="middle" letter-spacing="0.7" stroke="#000" stroke-width="0.2">1N4148</text>
<text x="662" y="862.7" font-size="9.5" font-weight="400" fill="#000" text-anchor="middle" letter-spacing="0.7" stroke="#000" stroke-width="0.2">D3</text>
<text x="662" y="888.6" font-size="9.5" font-weight="400" fill="#000" text-anchor="middle" letter-spacing="0.7" stroke="#000" stroke-width="0.2">1N4148</text>
<text x="924" y="835" font-size="9.5" font-weight="400" fill="#000" text-anchor="middle" letter-spacing="0.7" stroke="#000" stroke-width="0.2">L3</text>
<text x="924" y="858.5" font-size="9.5" font-weight="400" fill="#000" text-anchor="middle" letter-spacing="0.7" stroke="#000" stroke-width="0.2">150m</text>
<text x="1003.5" y="835" font-size="9.5" font-weight="400" fill="#000" text-anchor="middle" letter-spacing="0.7" stroke="#000" stroke-width="0.2">C5</text>
<text x="1004" y="861.5" font-size="9.5" font-weight="400" fill="#000" text-anchor="middle" letter-spacing="0.7" stroke="#000" stroke-width="0.2">100n</text>
<text x="881" y="873" font-size="9.5" font-weight="400" fill="#000" text-anchor="end" letter-spacing="0.7" stroke="#000" stroke-width="0.2">C3</text>
<text x="881" y="894" font-size="9.5" font-weight="400" fill="#000" text-anchor="end" letter-spacing="0.7" stroke="#000" stroke-width="0.2">50n</text>
<text x="965" y="873" font-size="9.5" font-weight="400" fill="#000" text-anchor="end" letter-spacing="0.7" stroke="#000" stroke-width="0.2">C4</text>
<text x="965" y="894" font-size="9.5" font-weight="400" fill="#000" text-anchor="end" letter-spacing="0.7" stroke="#000" stroke-width="0.2">50n</text>
<text x="1050" y="892" font-size="9.5" font-weight="400" fill="#000" text-anchor="end" letter-spacing="0.7" stroke="#000" stroke-width="0.2">R2</text>
<text x="1050" y="908" font-size="9.5" font-weight="400" fill="#000" text-anchor="end" letter-spacing="0.7" stroke="#000" stroke-width="0.2">10k</text>
<text x="1038" y="842.5" font-size="9.5" font-weight="400" fill="#000" text-anchor="start" letter-spacing="0.7" stroke="#000" stroke-width="0.2">OUT_2</text>
<text x="589" y="701.5" font-size="9.5" font-weight="400" fill="#000" text-anchor="start" letter-spacing="0.7" stroke="#000" stroke-width="0.2">V4</text>
<text x="459" y="786.5" font-size="9.5" font-weight="400" fill="#000" text-anchor="start" letter-spacing="0.7" stroke="#000" stroke-width="0.2">Rser=50</text>
<text x="459" y="801" font-size="9.5" font-weight="400" fill="#000" text-anchor="start" letter-spacing="0.7" stroke="#000" stroke-width="0.2">SINE(0 100m 2000000)</text>
<text x="600.5" y="762" font-size="9.5" font-weight="400" fill="#000" text-anchor="start" letter-spacing="0.7" stroke="#000" stroke-width="0.2">Rser=50</text>
<text x="598.5" y="772" font-size="9.5" font-weight="400" fill="#000" text-anchor="start" letter-spacing="0.7" stroke="#000" stroke-width="0.2">SINE(0 2 1000350)</text>
<text x="459" y="968.5" font-size="9.5" font-weight="400" fill="#000" text-anchor="start" letter-spacing="0.7" stroke="#000" stroke-width="0.2">Rser=50</text>
<text x="459" y="982" font-size="9.5" font-weight="400" fill="#000" text-anchor="start" letter-spacing="0.7" stroke="#000" stroke-width="0.2">SINE(0 100m 2000000 0 0 90)</text>
<text x="1112.5" y="863" font-size="9.5" font-weight="400" fill="#000" text-anchor="start" letter-spacing="0.7" stroke="#000" stroke-width="0.2">.tran 0 10m 3m</text>
<text x="1105.5" y="877" font-size="9.5" font-weight="400" fill="#1818A8" text-anchor="start" letter-spacing="0.7" stroke="#1818A8" stroke-width="0.2">.step param Vh 0.8 1.5 0.1</text>
<path d="M473.5 664.5L634.5 664.5 M473.5 664.5L473.5 695.5 M473.5 722.5L473.5 761.5 M634.5 636.5L634.5 691.5 M690.5 636.5L690.5 691.5 M634.5 636.5L657.5 636.5 M667.5 636.5L690.5 636.5 M634.5 691.5L657.5 691.5 M667.5 691.5L690.5 691.5 M690.5 664.5L906.5 664.5 M942.5 664.5L1002.5 664.5 M1006.5 664.5L1060.5 664.5 M885.5 664.5L885.5 697.5 M885.5 700.5L885.5 733.5 M969.5 664.5L969.5 697.5 M969.5 700.5L969.5 733.5 M1060.5 664.5L1060.5 702.5 M1060.5 730.5L1060.5 775.5 M473.5 845.5L634.5 845.5 M473.5 845.5L473.5 876.5 M473.5 903.5L473.5 942.5 M634.5 817.5L634.5 872.5 M690.5 817.5L690.5 872.5 M634.5 817.5L657.5 817.5 M667.5 817.5L690.5 817.5 M634.5 872.5L657.5 872.5 M667.5 872.5L690.5 872.5 M690.5 845.5L906.5 845.5 M942.5 845.5L1002.5 845.5 M1006.5 845.5L1060.5 845.5 M885.5 845.5L885.5 878.5 M885.5 881.5L885.5 914.5 M969.5 845.5L969.5 878.5 M969.5 881.5L969.5 914.5 M1060.5 845.5L1060.5 883.5 M1060.5 911.5L1060.5 956.5 M578.5 664.5L578.5 702.5 M578.5 730.5L578.5 845.5 M473.5 845.5L634.5 845.5" stroke="#0000FF" stroke-width="1" fill="none"/>
<circle cx="473.5" cy="708.5" r="13.5" stroke="#000080" fill="none"/>
<path d="M470 700.5H478 M474 697V704 M470 718.5H478" stroke="#000080" stroke-width="1" fill="none"/>
<path d="M465.5 761.5H481.5L473.5 769.5Z" stroke="#000080" stroke-width="1" fill="none"/>
<path d="M657.5 629V644 M667.5 628.5V643.5L657.5 636.5L667.5 628.5" stroke="#000080" stroke-width="1" fill="none"/>
<path d="M667.5 684V699 M657.5 684.5V698.5L667.5 691.5L657.5 684.5" stroke="#000080" stroke-width="1" fill="none"/>
<path d="M906.5 664.5L910 657.5H917.5 M917.5 657.5C916.5 661 916.5 668 919 668 C921.5 668 921.5 661 919 657.5 M919 657.5H929.3 M929.3 657.5C926.8 661 926.8 668 929.3 668 C931.8 668 931.8 661 929.3 657.5 M929.3 657.5H938.5L942 664.5" stroke="#000080" stroke-width="1" fill="none"/>
<path d="M1002.5 657V672 M1006.5 657V672" stroke="#000080" stroke-width="1" fill="none"/>
<path d="M878 697.5H893 M878 700.5H893" stroke="#000080" stroke-width="1" fill="none"/>
<path d="M878 733.5H893L885.5 741.5Z" stroke="#000080" stroke-width="1" fill="none"/>
<path d="M962 697.5H977 M962 700.5H977" stroke="#000080" stroke-width="1" fill="none"/>
<path d="M962 733.5H977L969.5 741.5Z" stroke="#000080" stroke-width="1" fill="none"/>
<path d="M1060.5 702L1067.6 705.2L1053.3 712.1L1067.6 719.3L1053.3 726.2L1060.5 730" stroke="#000080" stroke-width="1" fill="none"/>
<path d="M1052.5 775.5H1068.5L1060.5 783.5Z" stroke="#000080" stroke-width="1" fill="none"/>
<circle cx="473.5" cy="889.5" r="13.5" stroke="#000080" fill="none"/>
<path d="M470 881.5H478 M474 878V885 M470 899.5H478" stroke="#000080" stroke-width="1" fill="none"/>
<path d="M465.5 942.5H481.5L473.5 950.5Z" stroke="#000080" stroke-width="1" fill="none"/>
<path d="M657.5 810V825 M667.5 809.5V824.5L657.5 817.5L667.5 809.5" stroke="#000080" stroke-width="1" fill="none"/>
<path d="M667.5 865V880 M657.5 865.5V879.5L667.5 872.5L657.5 865.5" stroke="#000080" stroke-width="1" fill="none"/>
<path d="M906.5 845.5L910 838.5H917.5 M917.5 838.5C916.5 842 916.5 849 919 849 C921.5 849 921.5 842 919 838.5 M919 838.5H929.3 M929.3 838.5C926.8 842 926.8 849 929.3 849 C931.8 849 931.8 842 929.3 838.5 M929.3 838.5H938.5L942 845.5" stroke="#000080" stroke-width="1" fill="none"/>
<path d="M1002.5 838V853 M1006.5 838V853" stroke="#000080" stroke-width="1" fill="none"/>
<path d="M878 878.5H893 M878 881.5H893" stroke="#000080" stroke-width="1" fill="none"/>
<path d="M878 914.5H893L885.5 922.5Z" stroke="#000080" stroke-width="1" fill="none"/>
<path d="M962 878.5H977 M962 881.5H977" stroke="#000080" stroke-width="1" fill="none"/>
<path d="M962 914.5H977L969.5 922.5Z" stroke="#000080" stroke-width="1" fill="none"/>
<path d="M1060.5 883L1067.6 886.2L1053.3 893.1L1067.6 900.3L1053.3 907.2L1060.5 911" stroke="#000080" stroke-width="1" fill="none"/>
<path d="M1052.5 956.5H1068.5L1060.5 964.5Z" stroke="#000080" stroke-width="1" fill="none"/>
<circle cx="578.5" cy="716" r="13.5" stroke="#000080" fill="none"/>
<path d="M575 708H583 M579 704.5V711.5 M575 726H583" stroke="#000080" stroke-width="1" fill="none"/>
<rect x="632" y="662" width="5" height="5" fill="#0000FF"/>
<rect x="688" y="662" width="5" height="5" fill="#0000FF"/>
<rect x="883" y="662" width="5" height="5" fill="#0000FF"/>
<rect x="967" y="662" width="5" height="5" fill="#0000FF"/>
<rect x="632" y="843" width="5" height="5" fill="#0000FF"/>
<rect x="688" y="843" width="5" height="5" fill="#0000FF"/>
<rect x="883" y="843" width="5" height="5" fill="#0000FF"/>
<rect x="967" y="843" width="5" height="5" fill="#0000FF"/>
<rect x="576" y="662" width="5" height="5" fill="#0000FF"/>
<rect x="576" y="843" width="5" height="5" fill="#0000FF"/>
<rect x="1244" y="370" width="440" height="635" fill="#0040E0" />
<rect x="1246" y="370" width="440" height="31" fill="url(#gAct)" />
<rect x="1248" y="400" width="440" height="2" fill="#A8A8B0" />
<rect x="1249" y="402" width="440" height="597" fill="#000000" />
<rect x="1248" y="400" width="1" height="599" fill="#A8A8B0" />
<path d="M1244 370H1250Q1244 370 1244 376Z" fill="#000"/>
<rect x="1248" y="999" width="440" height="2" fill="#FFFFFF" />
<path d="M1341.5 421V973 M1385.5 421V973 M1416.5 421V973 M1440.5 421V973 M1460.5 421V973 M1477.5 421V973 M1491.5 421V973 M1504.5 421V973 M1515.5 421V973 M1591.5 421V973 M1635.5 421V973 M1666.5 421V973" stroke="#ACACAC" stroke-width="1" stroke-dasharray="3 3" stroke-dashoffset="2" fill="none"/>
<path d="M1304 466.5H1680 M1304 512.5H1680 M1304 558.5H1680 M1304 604.5H1680 M1304 650.5H1680 M1304 696.5H1680 M1304 743.5H1680 M1304 789.5H1680 M1304 835.5H1680 M1304 881.5H1680 M1304 927.5H1680" stroke="#ACACAC" stroke-width="1" stroke-dasharray="3 3" fill="none"/>
<path d="M1304.5 420V974 M1304 420.5H1680 M1304 973.5H1680" stroke="#C8C8C8" stroke-width="1" fill="none"/>
<path d="M1297 420.5H1304 M1297 466.5H1304 M1297 512.5H1304 M1297 558.5H1304 M1297 604.5H1304 M1297 650.5H1304 M1297 696.5H1304 M1297 743.5H1304 M1297 789.5H1304 M1297 835.5H1304 M1297 881.5H1304 M1297 927.5H1304 M1297 973.5H1304 M1341.5 973V977 M1385.5 973V977 M1416.5 973V977 M1440.5 973V977 M1460.5 973V977 M1477.5 973V977 M1491.5 973V977 M1504.5 973V977 M1515.5 973V977 M1591.5 973V977 M1635.5 973V977 M1666.5 973V977" stroke="#C8C8C8" stroke-width="1" fill="none"/>
<text x="1296" y="425.3" font-size="13.8" font-weight="700" fill="#DCDCDC" text-anchor="end" >-20dB</text>
<text x="1296" y="471.3" font-size="13.8" font-weight="700" fill="#DCDCDC" text-anchor="end" >-30dB</text>
<text x="1296" y="517.3" font-size="13.8" font-weight="700" fill="#DCDCDC" text-anchor="end" >-40dB</text>
<text x="1296" y="563.3" font-size="13.8" font-weight="700" fill="#DCDCDC" text-anchor="end" >-50dB</text>
<text x="1296" y="609.3" font-size="13.8" font-weight="700" fill="#DCDCDC" text-anchor="end" >-60dB</text>
<text x="1296" y="655.3" font-size="13.8" font-weight="700" fill="#DCDCDC" text-anchor="end" >-70dB</text>
<text x="1296" y="701.3" font-size="13.8" font-weight="700" fill="#DCDCDC" text-anchor="end" >-80dB</text>
<text x="1296" y="748.3" font-size="13.8" font-weight="700" fill="#DCDCDC" text-anchor="end" >-90dB</text>
<text x="1296" y="794.3" font-size="13.8" font-weight="700" fill="#DCDCDC" text-anchor="end" >-100dB</text>
<text x="1296" y="840.3" font-size="13.8" font-weight="700" fill="#DCDCDC" text-anchor="end" >-110dB</text>
<text x="1296" y="886.3" font-size="13.8" font-weight="700" fill="#DCDCDC" text-anchor="end" >-120dB</text>
<text x="1296" y="932.3" font-size="13.8" font-weight="700" fill="#DCDCDC" text-anchor="end" >-130dB</text>
<text x="1296" y="978.3" font-size="13.8" font-weight="700" fill="#DCDCDC" text-anchor="end" >-140dB</text>
<text x="1514.2" y="994.3" font-size="13.8" font-weight="700" fill="#DCDCDC" text-anchor="middle" >1KHz</text>
<clipPath id="c2"><rect x="1304" y="420" width="374" height="554"/></clipPath>
<polyline points="1304.6,622.4 1323.8,616.2 1341.4,612.4 1366.7,606.7 1381,601.9 1385.7,598.6 1396.2,592.4 1413.3,584.3 1417.1,583.3 1422.9,580 1427.6,575.7 1434.6,566 1440,560.5 1454.8,545.8 1456.4,532 1458.9,511 1462.1,493.2 1468.6,475.3 1473.4,464 1479.1,454.3 1484.8,465.6 1490.4,480.2 1494.5,498 1496.9,517.4 1499.4,547.4 1509.1,559.6 1515.5,570.9 1520.4,574.1 1530,584.3 1539.8,592 1554.7,603.5 1566.2,611.4 1571.4,613.5 1581.9,621.9 1585.1,626.6 1591.4,643.4 1598.2,594.1 1602.4,602.5 1605.5,618.7 1613.4,625.6 1620.7,630.8 1630.1,635.5 1634.3,636.6 1640.6,640.2 1655.3,647 1665.8,650.7 1677.3,655.4 1690,660.5" stroke="#00FF00" stroke-width="1.1" fill="none" clip-path="url(#c2)"/>
<rect x="1678" y="102" width="2" height="946" fill="#F4F4F0" />
<linearGradient id="gBtnB" x1="0" y1="0" x2="1" y2="1"><stop offset="0" stop-color="#4A80F8"/><stop offset="1" stop-color="#1E50D8"/></linearGradient>
<linearGradient id="gBtnR" x1="0" y1="0" x2="1" y2="1"><stop offset="0" stop-color="#F07850"/><stop offset="1" stop-color="#D83C10"/></linearGradient>
<linearGradient id="gBtnBd" x1="0" y1="0" x2="1" y2="1"><stop offset="0" stop-color="#6A90F0"/><stop offset="1" stop-color="#4A70E0"/></linearGradient>
<linearGradient id="gBtnRd" x1="0" y1="0" x2="1" y2="1"><stop offset="0" stop-color="#C87888"/><stop offset="1" stop-color="#A85868"/></linearGradient>
<rect x="1611.5" y="2.5" width="20" height="20" rx="3" fill="url(#gBtnB)" stroke="#FFFFFF" stroke-opacity="0.9"/>
<rect x="1616" y="15" width="7" height="3" fill="#FFF"/>
<rect x="1634.5" y="2.5" width="20" height="20" rx="3" fill="url(#gBtnB)" stroke="#FFFFFF" stroke-opacity="0.9"/>
<path d="M1642.5 10V8.5H1650.5V14.5H1649" stroke="#FFF" stroke-width="1" fill="none"/><rect x="1642" y="8" width="9" height="2" fill="#FFF"/><rect x="1639.5" y="12.5" width="7" height="6" fill="none" stroke="#FFF"/><rect x="1639" y="12" width="8" height="2" fill="#FFF"/>
<rect x="1657.5" y="2.5" width="20" height="20" rx="3" fill="url(#gBtnR)" stroke="#FFFFFF" stroke-opacity="0.9"/>
<path d="M1663 8L1672 17 M1672 8L1663 17" stroke="#FFF" stroke-width="2"/>
<path d="M7.5 7.5H16.5 M7.5 7.5L4.5 15.5H10.5 M15.5 7.5L12 15.5" stroke="#1A1A70" stroke-width="1.4" fill="none"/><path d="M5.5 11L4 15.8H8L8.5 14H6.5Z M13.5 7H16.8L15.8 10.5L14.5 10Z" fill="#A00010"/>
<g transform="translate(8,113)"><rect x="3" y="0" width="13" height="13" fill="#D4D0D0"/><rect x="0" y="0" width="2" height="13" fill="#F4F4F4"/><rect x="3" y="14" width="13" height="2" fill="#F4F4F4"/><rect x="2" y="0" width="1" height="16" fill="#000"/><rect x="0" y="13" width="16" height="1" fill="#000"/><rect x="0" y="1" width="2" height="1" fill="#000"/><rect x="0" y="4" width="2" height="1" fill="#000"/><rect x="0" y="7" width="2" height="1" fill="#000"/><rect x="0" y="10" width="2" height="1" fill="#000"/><rect x="5" y="14" width="1" height="2" fill="#000"/><rect x="8" y="14" width="1" height="2" fill="#000"/><rect x="11" y="14" width="1" height="2" fill="#000"/><rect x="14" y="14" width="1" height="2" fill="#000"/><polyline points="3,9.5 6.5,5.8 9,5.8 11.5,8 13,8 16,4.5" stroke="#C80018" stroke-width="2" fill="none"/></g>
<text x="28" y="127" font-size="13" font-weight="700" fill="#E8F0FF" text-anchor="start" >mieszacz 2 diody 3</text>
<rect x="1605.5" y="111.5" width="20" height="20" rx="3" fill="url(#gBtnBd)" stroke="#FFFFFF" stroke-opacity="0.9"/>
<rect x="1610" y="124" width="7" height="3" fill="#FFF"/>
<rect x="1628.5" y="111.5" width="20" height="20" rx="3" fill="url(#gBtnBd)" stroke="#FFFFFF" stroke-opacity="0.9"/>
<rect x="1633.5" y="116.5" width="10" height="10" fill="none" stroke="#FFF" stroke-width="1"/><rect x="1633" y="116" width="11" height="2" fill="#FFF"/>
<rect x="1651.5" y="111.5" width="20" height="20" rx="3" fill="url(#gBtnRd)" stroke="#FFFFFF" stroke-opacity="0.9"/>
<path d="M1657 117L1666 126 M1666 117L1657 126" stroke="#FFF" stroke-width="2"/>
<g transform="translate(10,575)" stroke="#0000A0" fill="none"><path d="M0 8.5H3.5" stroke-width="1"/><rect x="3" y="4" width="2" height="9" fill="#0000A0" stroke="none"/><path d="M5 5.5L9.5 1 M5 11.5L10.5 17" stroke-width="1"/><path d="M7 14.5L10 13L9.5 16Z" fill="#0000A0" stroke-width="1"/></g>
<text x="27.5" y="589" font-size="13" font-weight="700" fill="#E8F0FF" text-anchor="start" >mieszacz 2 diody 3</text>
<g transform="translate(1250,378)"><rect x="3" y="0" width="13" height="13" fill="#D4D0D0"/><rect x="0" y="0" width="2" height="13" fill="#F4F4F4"/><rect x="3" y="14" width="13" height="2" fill="#F4F4F4"/><rect x="2" y="0" width="1" height="16" fill="#000"/><rect x="0" y="13" width="16" height="1" fill="#000"/><rect x="0" y="1" width="2" height="1" fill="#000"/><rect x="0" y="4" width="2" height="1" fill="#000"/><rect x="0" y="7" width="2" height="1" fill="#000"/><rect x="0" y="10" width="2" height="1" fill="#000"/><rect x="5" y="14" width="1" height="2" fill="#000"/><rect x="8" y="14" width="1" height="2" fill="#000"/><rect x="11" y="14" width="1" height="2" fill="#000"/><rect x="14" y="14" width="1" height="2" fill="#000"/><polyline points="3,9.5 6.5,5.8 9,5.8 11.5,8 13,8 16,4.5" stroke="#C80018" stroke-width="2" fill="none"/></g>
<text x="1269" y="392" font-size="13" font-weight="700" fill="#FFFFFF" text-anchor="start" >mieszacz 2 diody 3</text>
<text x="5.7" y="40" font-size="11" font-weight="400" fill="#000" text-anchor="start" letter-spacing="-0.2">File</text>
<text x="34" y="40" font-size="11" font-weight="400" fill="#000" text-anchor="start" letter-spacing="-0.2">View</text>
<text x="67.8" y="40" font-size="11" font-weight="400" fill="#000" text-anchor="start" letter-spacing="-0.2">Plot Settings</text>
<text x="139.6" y="40" font-size="11" font-weight="400" fill="#000" text-anchor="start" letter-spacing="-0.2">Simulation</text>
<text x="200" y="40" font-size="11" font-weight="400" fill="#000" text-anchor="start" letter-spacing="-0.2">Tools</text>
<text x="237" y="40" font-size="11" font-weight="400" fill="#000" text-anchor="start" letter-spacing="-0.2">Window</text>
<text x="286.7" y="40" font-size="11" font-weight="400" fill="#000" text-anchor="start" letter-spacing="-0.2">Help</text>
<rect x="2" y="50" width="1" height="23" fill="#FFFFFF" />
<rect x="3" y="50" width="1" height="23" fill="#B0AE9E" />
<path d="M62.5 52V72" stroke="#B8B6A6" stroke-width="1"/><path d="M63.5 52V72" stroke="#FFFFFF" stroke-width="1"/>
<path d="M93.5 52V72" stroke="#B8B6A6" stroke-width="1"/><path d="M94.5 52V72" stroke="#FFFFFF" stroke-width="1"/>
<path d="M124.5 52V72" stroke="#B8B6A6" stroke-width="1"/><path d="M125.5 52V72" stroke="#FFFFFF" stroke-width="1"/>
<path d="M178.5 52V72" stroke="#B8B6A6" stroke-width="1"/><path d="M179.5 52V72" stroke="#FFFFFF" stroke-width="1"/>
<path d="M278.5 52V72" stroke="#B8B6A6" stroke-width="1"/><path d="M279.5 52V72" stroke="#FFFFFF" stroke-width="1"/>
<path d="M332.5 52V72" stroke="#B8B6A6" stroke-width="1"/><path d="M333.5 52V72" stroke="#FFFFFF" stroke-width="1"/>
<path d="M409.5 52V72" stroke="#B8B6A6" stroke-width="1"/><path d="M410.5 52V72" stroke="#FFFFFF" stroke-width="1"/>
<path d="M509.5 52V72" stroke="#B8B6A6" stroke-width="1"/><path d="M510.5 52V72" stroke="#FFFFFF" stroke-width="1"/>
<path d="M563.5 52V72" stroke="#B8B6A6" stroke-width="1"/><path d="M564.5 52V72" stroke="#FFFFFF" stroke-width="1"/>
<path d="M942.5 48V76" stroke="#B8B6A6"/>
<g transform="translate(17,54)"><path d="M0.5 0.5H10L13.5 4V14.5H0.5Z" fill="#FFF" stroke="#000"/><path d="M10 0.5V4H13.5" fill="none" stroke="#000"/><path d="M2 10L5 6H8L7 7.5H9.5L11 5.5L11.5 8L9 11H6L7 9.5H4.5Z" fill="#E01020"/></g>
<g transform="translate(40,54)"><path d="M0.5 3.5H5L6.5 5H11.5V7H3.5L0.5 13.5Z" fill="#F8F0A0" stroke="#000"/><path d="M3.5 7H15.5L12 13.5H0.5Z" fill="#8C9030" stroke="#000"/><path d="M8 2.5Q11 -0.5 14 2.5" fill="none" stroke="#000"/><path d="M12.5 2.5H15V0" fill="none" stroke="#000"/></g>
<g transform="translate(71,54)"><rect x="0.5" y="0.5" width="13" height="13" fill="#8C9030" stroke="#000"/><rect x="3" y="1" width="8" height="5" fill="#C8C898"/><rect x="2" y="9" width="10" height="4.5" fill="#000"/><rect x="8" y="10" width="2" height="3" fill="#FFF"/></g>
<g transform="translate(101,54)"><path d="M1 4Q3 0 8 0.5Q13 0.5 15.5 5L14 6Q12 3.5 9.5 4H6Q3 4 1.5 6Z" fill="#F0F0F0" stroke="#000"/><rect x="6" y="5" width="4" height="10" fill="#0018C0" stroke="#000010" stroke-width="0.5"/></g>
<g transform="translate(132,54)"><path d="M9 1L12 0.5M10 2L7 8L4 9L1 14M7 8L10 10L9 14.5M8.5 4L12 6L14.5 5M8.5 4L5 4L3 6M1 2L4 3" stroke="#A8A69A" stroke-width="1.6" fill="none"/></g>
<g transform="translate(156,54)"><path d="M4 14Q1 10 0.5 8L2 7L4 9V2Q4 1 5 1Q6 1 6 2V7V0.8Q6 0 7 0Q8 0 8 1V7V1.5Q8 0.7 9 0.7Q10 0.7 10 1.5V7V3Q10 2 11 2Q12 2 12 3V10Q12 14 9 14.5Z" stroke="#A8A69A" fill="#F4F2EA"/></g>
<g transform="translate(187,54)"><circle cx="5.5" cy="5.5" r="5" fill="#D8F0F0" stroke="#000" stroke-width="1.4"/><path d="M2.5 5.5H8.5M5.5 2.5V8.5" stroke="#000" stroke-width="1.4"/><path d="M9 9L14 14" stroke="#000" stroke-width="2.4"/></g>
<g transform="translate(210,54)"><circle cx="5.5" cy="5.5" r="5" fill="#D8F0F0" stroke="#000" stroke-width="1.4"/><path d="M9 9L14 14" stroke="#000" stroke-width="2.4"/></g>
<g transform="translate(233,54)"><circle cx="5.5" cy="5.5" r="5" fill="#D8F0F0" stroke="#000" stroke-width="1.4"/><path d="M2.5 5.5H8.5" stroke="#000" stroke-width="1.4"/><path d="M9 9L14 14" stroke="#000" stroke-width="2.4"/></g>
<g transform="translate(255,54)"><circle cx="5.5" cy="5.5" r="5" fill="#D8F0F0" stroke="#000" stroke-width="1.4"/><path d="M0 1L11 11M11 0L0 11" stroke="#E00010" stroke-width="1.4"/><path d="M9 9L14 14" stroke="#000" stroke-width="2.4"/></g>
<g transform="translate(286,54)"><path d="M1.5 0V14.5H16" stroke="#000" stroke-width="1.5" fill="none"/><rect x="0" y="2" width="1" height="1" fill="#000"/><rect x="0" y="5" width="1" height="1" fill="#000"/><rect x="0" y="8" width="1" height="1" fill="#000"/><rect x="0" y="11" width="1" height="1" fill="#000"/><rect x="4" y="15" width="1" height="1" fill="#000"/><rect x="7" y="15" width="1" height="1" fill="#000"/><rect x="10" y="15" width="1" height="1" fill="#000"/><rect x="13" y="15" width="1" height="1" fill="#000"/><path d="M2 4L5 1L8 4L11 1L15 4" stroke="#000" fill="none"/><path d="M2 7L6 8L10 7L15 8" stroke="#E02020" fill="none"/><path d="M2 10L6 11L10 10L15 11" stroke="#000080" fill="none"/></g>
<g transform="translate(309,54)"><path d="M1.5 0V14.5H16" stroke="#000" stroke-width="1.5" fill="none"/><rect x="0" y="2" width="1" height="1" fill="#000"/><rect x="0" y="5" width="1" height="1" fill="#000"/><rect x="0" y="8" width="1" height="1" fill="#000"/><rect x="0" y="11" width="1" height="1" fill="#000"/><rect x="4" y="15" width="1" height="1" fill="#000"/><rect x="7" y="15" width="1" height="1" fill="#000"/><rect x="10" y="15" width="1" height="1" fill="#000"/><rect x="13" y="15" width="1" height="1" fill="#000"/><path d="M13 1Q4 2 5 7Q6 12 13 13" stroke="#E04040" fill="none"/><path d="M13 1V13M11 3L13 1L15 3M11 11L13 13L15 11" stroke="#000" fill="none"/><path d="M4 5V9M3 6L4 5L5 6M3 8L4 9L5 8" stroke="#000" fill="none"/></g>
<g transform="translate(340,54)"><rect x="0.75" y="0.75" width="14.5" height="13.5" fill="#E8EAF0" stroke="#000080" stroke-width="1.5"/><rect x="0" y="0" width="16" height="3" fill="#000080"/><rect x="0" y="7" width="16" height="3" fill="#000080"/><rect x="1" y="1" width="1" height="1" fill="#FFF"/><rect x="12" y="1" width="1" height="1" fill="#FFF"/><rect x="14" y="1" width="1" height="1" fill="#FFF"/><rect x="12" y="8" width="1" height="1" fill="#FFF"/><rect x="14" y="8" width="1" height="1" fill="#FFF"/></g>
<g transform="translate(363,54)"><rect x="0.5" y="0.5" width="8" height="6" fill="#E8EAF0" stroke="#000080"/><rect x="0" y="0" width="9" height="3" fill="#000080"/><rect x="3.5" y="4.5" width="8" height="6" fill="#E8EAF0" stroke="#000080"/><rect x="3" y="4" width="9" height="3" fill="#000080"/><rect x="7.5" y="8.5" width="8" height="6" fill="#E8EAF0" stroke="#000080"/><rect x="7" y="8" width="9" height="3" fill="#000080"/></g>
<g transform="translate(386,54)"><rect x="0.5" y="0.5" width="7" height="6" fill="#E8EAF0" stroke="#000080"/><rect x="0" y="0" width="8" height="3" fill="#000080"/><rect x="3.5" y="4.5" width="7" height="6" fill="#E8EAF0" stroke="#000080"/><rect x="3" y="4" width="8" height="3" fill="#000080"/><rect x="6.5" y="8.5" width="7" height="6" fill="#E8EAF0" stroke="#000080"/><rect x="6" y="8" width="8" height="3" fill="#000080"/><path d="M12 5L15 2M12 2V5H15" stroke="#000" fill="none"/></g>
<g transform="translate(421,54)"><path d="M2 0L6 9M8 0L4 9" stroke="#000080" stroke-width="1.2"/><circle cx="2.5" cy="11.5" r="2.2" fill="none" stroke="#000080" stroke-width="1.2"/><circle cx="7.5" cy="11.5" r="2.2" fill="none" stroke="#000080" stroke-width="1.2"/></g>
<g transform="translate(441,54)"><path d="M0.5 0.5H6L7.5 2V9.5H0.5Z" fill="#FFF" stroke="#000050"/><path d="M6.5 5.5H12L14.5 8V14.5H6.5Z" fill="#FFF" stroke="#000050"/><path d="M2 3.5H5M2 5.5H6M2 7.5H6M8 9.5H11M8 11.5H13M8 13H13" stroke="#000050"/></g>
<g transform="translate(464,54)"><rect x="0" y="2" width="11" height="12" rx="1" fill="#A8A69A"/><rect x="3" y="0.5" width="5" height="2.5" fill="#A8A69A"/><rect x="3" y="2.5" width="5" height="1" fill="#E8E6DA"/><path d="M6.5 8.5H14.5V14.5H6.5Z" fill="#F0EEE4" stroke="#A8A69A"/><path d="M8 11.5H13" stroke="#A8A69A"/></g>
<g transform="translate(487,55)"><path d="M2 0H5V4H6V13H0V6L1 4H2Z M11 0H14V4H15L16 6V13H10V4H11Z" fill="#000"/><rect x="6" y="5" width="4" height="4" fill="#000"/><rect x="1.5" y="8" width="2" height="3" fill="#FFF"/><rect x="12.5" y="8" width="2" height="3" fill="#FFF"/></g>
<g transform="translate(518,54)"><path d="M3.5 0.5H11L13 2.5V6H3.5Z" fill="#FFF" stroke="#000"/><path d="M0.5 6.5H15.5V13.5H0.5Z" fill="#D0D0D0" stroke="#000" stroke-width="1.2"/><path d="M2 9H14M2 11H14" stroke="#808080" stroke-dasharray="1 1"/></g>
<g transform="translate(540,54)"><path d="M4.5 0.5H13.5V5H4.5Z" fill="#FFF" stroke="#000"/><path d="M0.5 5.5H15.5V12.5H0.5Z" fill="#C8C8C0" stroke="#000" stroke-width="1.2"/><rect x="2" y="8" width="12" height="1.5" fill="#000"/><rect x="2" y="11" width="12" height="2" fill="#F0F0C0" stroke="#000" stroke-width="0.8"/></g>
<g transform="translate(572,54)"><path d="M1 14H15M2 13L10 1L12 2L4 13Z" stroke="#A8A69A" fill="#D8D6CA" stroke-width="1.2"/></g>
<g transform="translate(594,54)"><path d="M8 0V6M1 6H15L8 13Z" stroke="#A8A69A" fill="none" stroke-width="1.3"/></g>
<g transform="translate(617,54)"><rect x="0.5" y="0.5" width="14" height="10" fill="none" stroke="#A8A69A" stroke-width="1.3"/><path d="M7.5 11V15M5 8L7.5 2L10 8M6 6H9" stroke="#A8A69A" fill="none"/></g>
<g transform="translate(641,54)"><path d="M8 0L11 3L4 7L11 10L4 13L8 15" stroke="#A8A69A" fill="none" stroke-width="1.3"/></g>
<g transform="translate(664,54)"><path d="M7 0V5M0 5.5H14M0 9.5H14M7 10V15" stroke="#A8A69A" fill="none" stroke-width="1.6"/></g>
<g transform="translate(690,54)"><path d="M1 1Q6 1 5 4Q2 5 4 7Q7 8 4 11Q6 14 1 14" stroke="#A8A69A" fill="none" stroke-width="1.4"/></g>
<g transform="translate(709,54)"><path d="M0 2H16M2 2L8 9L14 2M0 9H16M8 0V15" stroke="#A8A69A" fill="none" stroke-width="1.3"/></g>
<g transform="translate(732,54)"><path d="M4 1H9Q15 1 15 7Q15 13 9 13H4Z M0 4H4M0 10H4M15 7H17" stroke="#A8A69A" fill="none" stroke-width="1.5"/></g>
<g transform="translate(755,54)"><path d="M5 14Q1 10 1 6L3 5L5 7V2Q5 1 6 1L7 2V6V1L9 0.5L10 6V2L12 2L12 7V4L14 4V10Q13 14 9 15Z" stroke="#A8A69A" fill="#F4F2EA" stroke-width="1.2"/></g>
<g transform="translate(778,54)"><path d="M4 14Q1 10 1 7L3 5H12Q14 6 14 9Q13 14 9 14Z M4 5V3L6 2L7 5V2L9 2L10 5V3L12 3.5V5" stroke="#A8A69A" fill="#F4F2EA" stroke-width="1.2"/></g>
<g transform="translate(800,54)"><path d="M3 5A6 6 0 1 0 8 2" stroke="#A8A69A" fill="none" stroke-width="1.6"/><path d="M0 3L4 6L4 1Z" fill="#A8A69A"/></g>
<g transform="translate(823,54)"><path d="M13 5A6 6 0 1 1 8 2" stroke="#A8A69A" fill="none" stroke-width="1.6"/><path d="M16 3L12 6L12 1Z" fill="#A8A69A"/></g>
<g transform="translate(847,54)"><path d="M1 5V15M1 5H6M1 10H5M1 15H6M9 6H16M9 10H16M9 15H16M9 6V15M12 10V15M16 10V15M6 3Q9 0 13 2" stroke="#A8A69A" fill="none" stroke-width="1.4"/></g>
<g transform="translate(869,54)"><path d="M1 5V15M1 5H6M1 10H5M1 15H6M16 5V15M11 5H16M12 10H16M11 15H16M5 3Q9 0 13 3" stroke="#A8A69A" fill="none" stroke-width="1.4"/></g>
<text x="893" y="68" font-size="14" font-weight="700" fill="#A8A69A" text-anchor="start" font-style="italic">Aa</text>
<g transform="translate(917,54)"><rect x="1" y="6" width="4" height="4" fill="none" stroke="#A8A69A" stroke-width="1.4"/><path d="M7 14V5H12V10H7" stroke="#A8A69A" fill="none" stroke-width="1.4"/></g>
<linearGradient id="gTab" x1="0" y1="0" x2="0" y2="1"><stop offset="0" stop-color="#FFFFFF"/><stop offset="0.6" stop-color="#F4F3EE"/><stop offset="1" stop-color="#E6E4D8"/></linearGradient>
<path d="M5.5 99.5V83Q5.5 80.5 8 80.5H123Q125.5 80.5 125.5 83V99.5" fill="url(#gTab)" stroke="#A0A090"/>
<path d="M127.5 99.5V83Q127.5 80.5 130 80.5H245.5Q248 80.5 248 83V99.5" fill="url(#gTab)" stroke="#A0A090"/>
<path d="M249.5 101V80Q249.5 77.5 252 77.5H371.5Q374 77.5 374 80V101" fill="#FCFCFE" stroke="#B0B0A0"/>
<rect x="250" y="78" width="124" height="2" fill="#F0B040"/><rect x="251" y="77" width="122" height="1" fill="#E0902C"/>
<rect x="374" y="99" width="1302" height="1" fill="#9A9A88" />
<rect x="0" y="100" width="1678" height="1" fill="#F4F6EC" />
<rect x="0" y="101" width="1678" height="1" fill="#8E988A" />
<rect x="0" y="102" width="1678" height="3" fill="#E2ECF6" />
<g transform="translate(12,81)" stroke="#0000A0" fill="none"><path d="M0 8.5H3.5" stroke-width="1"/><rect x="3" y="4" width="2" height="9" fill="#0000A0" stroke="none"/><path d="M5 5.5L9.5 1 M5 11.5L10.5 17" stroke-width="1"/><path d="M7 14.5L10 13L9.5 16Z" fill="#0000A0" stroke-width="1"/></g>
<g transform="translate(133,81)"><rect x="3" y="0" width="13" height="13" fill="#D4D0D0"/><rect x="0" y="0" width="2" height="13" fill="#F4F4F4"/><rect x="3" y="14" width="13" height="2" fill="#F4F4F4"/><rect x="2" y="0" width="1" height="16" fill="#000"/><rect x="0" y="13" width="16" height="1" fill="#000"/><rect x="0" y="1" width="2" height="1" fill="#000"/><rect x="0" y="4" width="2" height="1" fill="#000"/><rect x="0" y="7" width="2" height="1" fill="#000"/><rect x="0" y="10" width="2" height="1" fill="#000"/><rect x="5" y="14" width="1" height="2" fill="#000"/><rect x="8" y="14" width="1" height="2" fill="#000"/><rect x="11" y="14" width="1" height="2" fill="#000"/><rect x="14" y="14" width="1" height="2" fill="#000"/><polyline points="3,9.5 6.5,5.8 9,5.8 11.5,8 13,8 16,4.5" stroke="#C80018" stroke-width="2" fill="none"/></g>
<g transform="translate(256,80)"><rect x="3" y="0" width="13" height="13" fill="#D4D0D0"/><rect x="0" y="0" width="2" height="13" fill="#F4F4F4"/><rect x="3" y="14" width="13" height="2" fill="#F4F4F4"/><rect x="2" y="0" width="1" height="16" fill="#000"/><rect x="0" y="13" width="16" height="1" fill="#000"/><rect x="0" y="1" width="2" height="1" fill="#000"/><rect x="0" y="4" width="2" height="1" fill="#000"/><rect x="0" y="7" width="2" height="1" fill="#000"/><rect x="0" y="10" width="2" height="1" fill="#000"/><rect x="5" y="14" width="1" height="2" fill="#000"/><rect x="8" y="14" width="1" height="2" fill="#000"/><rect x="11" y="14" width="1" height="2" fill="#000"/><rect x="14" y="14" width="1" height="2" fill="#000"/><polyline points="3,9.5 6.5,5.8 9,5.8 11.5,8 13,8 16,4.5" stroke="#C80018" stroke-width="2" fill="none"/></g>
<text x="32.5" y="94.5" font-size="10.7" font-weight="400" fill="#000" text-anchor="start" >mieszacz 2 diody 3</text>
<text x="155.8" y="94.5" font-size="10.7" font-weight="400" fill="#000" text-anchor="start" >mieszacz 2 diody 3</text>
<text x="278.5" y="92.5" font-size="10.7" font-weight="400" fill="#000" text-anchor="start" >mieszacz 2 diody 3</text>
<rect x="6.0" y="41" width="5" height="1" fill="#000" />
<rect x="34.3" y="41" width="6" height="1" fill="#000" />
<rect x="68.1" y="41" width="6" height="1" fill="#000" />
<rect x="139.9" y="41" width="6" height="1" fill="#000" />
<rect x="200.3" y="41" width="6" height="1" fill="#000" />
<rect x="237.3" y="41" width="9" height="1" fill="#000" />
<rect x="287.0" y="41" width="7" height="1" fill="#000" />
<rect x="1" y="1027" width="1677" height="2" fill="#545C94" />
<rect x="0" y="1029" width="1678" height="3" fill="#FAFDF4" />
<rect x="0" y="1032" width="1678" height="1" fill="#8C9080" />
<rect x="0" y="1048" width="1680" height="2" fill="#3A7FD8" />
<text x="2" y="1046" font-size="11" font-weight="400" fill="#000" text-anchor="start" >x = 547.794Hz</text>
<text x="86" y="1046" font-size="11" font-weight="400" fill="#000" text-anchor="start" >y = -16.528dB</text>
</svg></body></html>
